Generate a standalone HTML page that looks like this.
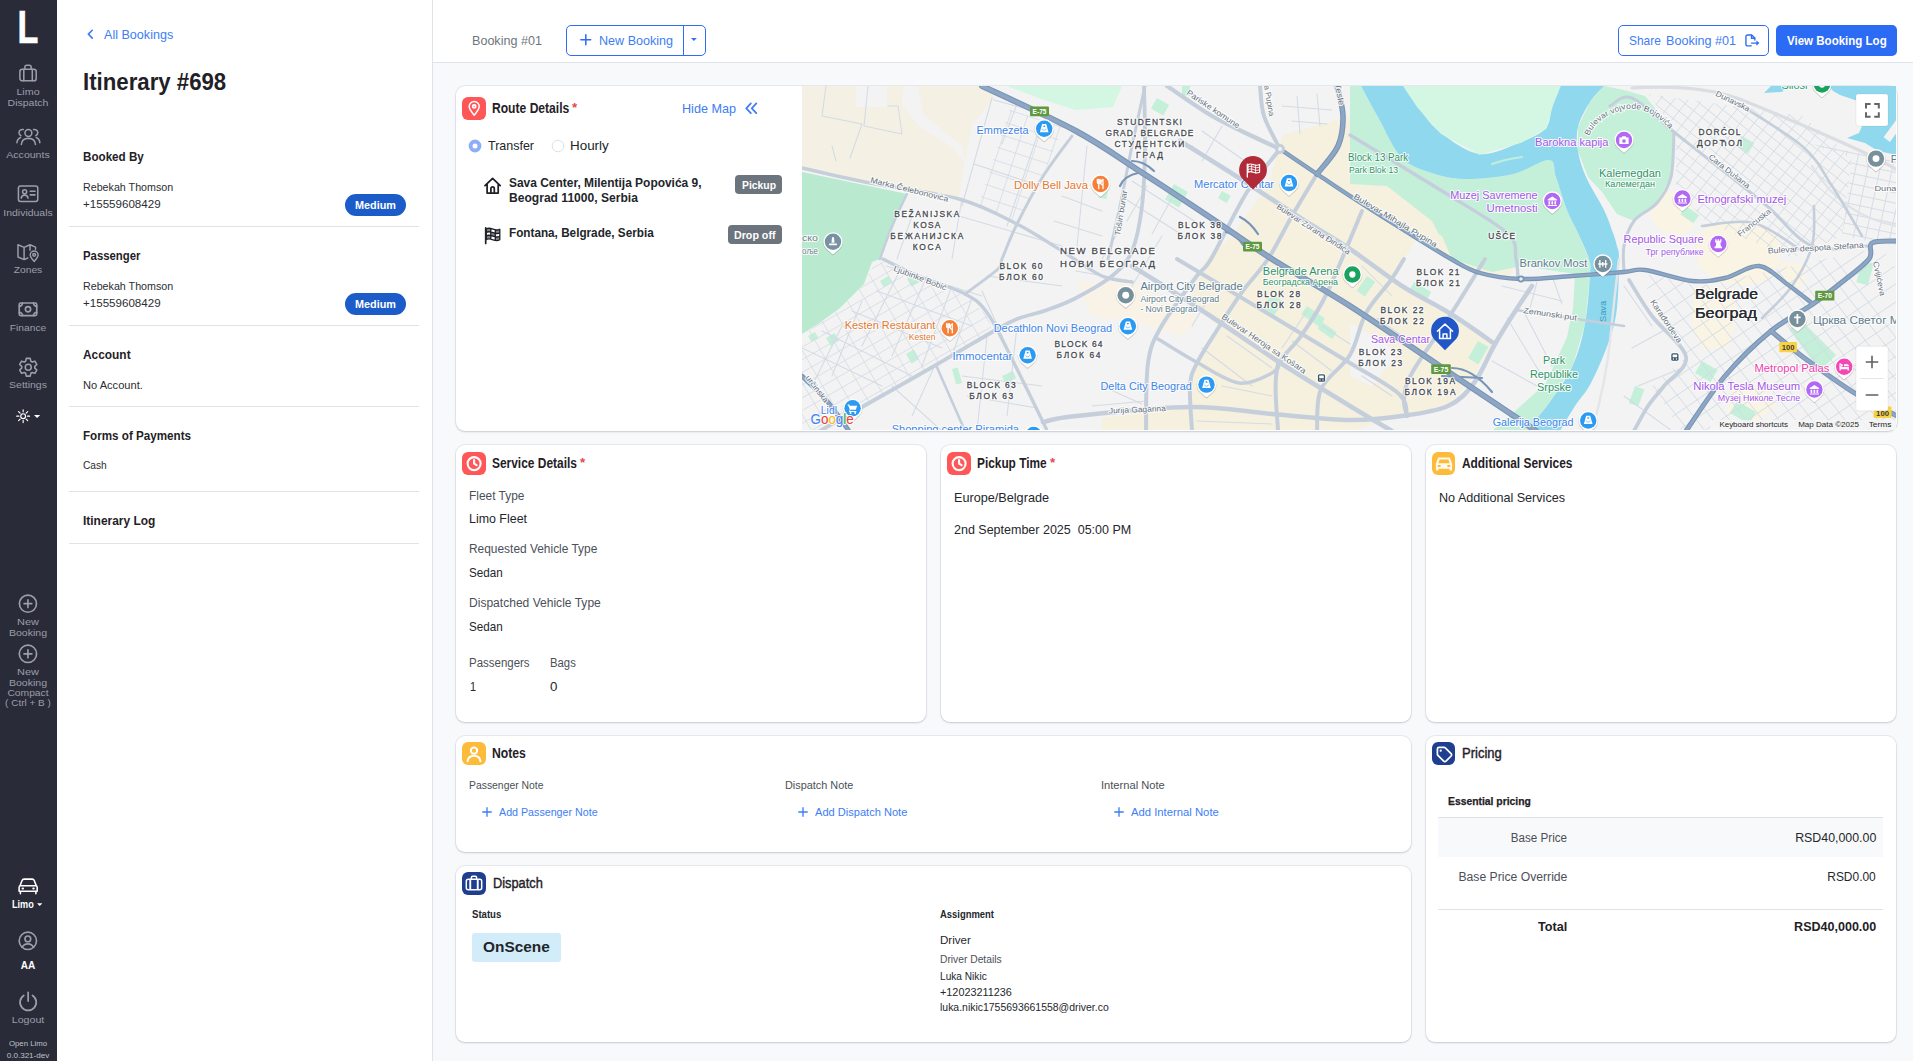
<!DOCTYPE html>
<html lang="en">
<head>
<meta charset="utf-8">
<title>Itinerary #698 - Open Limo</title>
<style>
*{box-sizing:border-box;margin:0;padding:0}
html,body{width:1913px;height:1061px;overflow:hidden}
body{position:relative;background:#f8f9fb;color:#212529;font-family:"Liberation Sans",sans-serif;font-size:14px;line-height:1}
div,span.t,svg.i,svg.map,hr,a,button,h1,h2,h3,p,label,section,nav,aside,header,main{position:absolute}
.g{position:static;display:contents}
span.t{white-space:pre;line-height:1;display:block}
svg.i{display:block;overflow:visible}
.nav{left:0;top:0;width:57px;height:1061px;background:#292b39}
.side{left:57px;top:0;width:376px;height:1061px;background:#fff;border-right:1px solid #dfe3ea}
.top{left:433px;top:0;width:1480px;height:63px;background:#fff;border-bottom:1px solid #dfe3ea}
.hr{height:1px;background:#dfe3ea;left:69px;width:350px}
.card{background:#fff;border-radius:9px;box-shadow:0 0 0 1px rgba(190,196,208,.28),0 1px 2px rgba(60,70,90,.22)}
.pill{background:#1b5cc8;border-radius:11px}
.badge{background:#6c757d;border-radius:4px}
.ib{border-radius:6px}
.btn{border:1px solid #2f6df4;border-radius:5px;background:#fff}
.btnp{border-radius:5px;background:#2c6bf4}
</style>
</head>
<body>
<nav class="nav">
<span class="t" id="t0" style="top:5.01px;font-size:45.8px;left:27.70px;font-weight:700;color:#fff;transform:translateX(-50%) scaleX(0.7433);transform-origin:50% 0;-webkit-text-stroke:.7px #fff;">L</span>
<svg class="i" style="left:17.9px;top:63.9px;width:20.1px;height:18.5px;color:#9c9ea8;" viewBox="0 0 20 20"><g fill="none" stroke="currentColor" stroke-linecap="round" stroke-linejoin="round" stroke-width="1.65"><rect x="1.2" y="5.6" width="17.6" height="12.6" rx="2.6"/><path d="M6.6 5.4V3.4a2 2 0 0 1 2-2h2.8a2 2 0 0 1 2 2v2M5.4 5.8v12.2M14.6 5.8v12.2"/></g></svg>
<span class="t" id="t1" style="top:87.01px;font-size:9.4px;left:28.10px;color:#9c9ea8;transform:translateX(-50%) scaleX(1.1413);transform-origin:50% 0;">Limo</span>
<span class="t" id="t2" style="top:98.01px;font-size:9.4px;left:28.00px;color:#9c9ea8;transform:translateX(-50%) scaleX(1.1210);transform-origin:50% 0;">Dispatch</span>
<svg class="i" style="left:15.6px;top:128px;width:24.8px;height:17.3px;color:#9c9ea8;" viewBox="0 0 26 18"><g fill="none" stroke="currentColor" stroke-linecap="round" stroke-linejoin="round" stroke-width="1.6"><circle cx="13" cy="5.2" r="3.6"/><path d="M5.6 17.2c.3-4.2 3.4-6.4 7.4-6.4s7.100 2.200 7.400 6.400M7.6 1.6c-2.4-.5-4.400 1.100-4.400 3.200 0 1.500.900 2.600 2 3.100M1 15.400c.200-2.900 1.600-4.700 3.800-5.500M18.400 1.600c2.400-.5 4.400 1.100 4.400 3.200 0 1.500-.9 2.600-2 3.100M25 15.400c-.2-2.900-1.600-4.700-3.800-5.500"/></g></svg>
<span class="t" id="t3" style="top:150.01px;font-size:9.4px;left:27.80px;color:#9c9ea8;transform:translateX(-50%) scaleX(1.1254);transform-origin:50% 0;">Accounts</span>
<svg class="i" style="left:16.9px;top:185.1px;width:22.2px;height:17.4px;color:#9c9ea8;" viewBox="0 0 22 18"><g fill="none" stroke="currentColor" stroke-linecap="round" stroke-linejoin="round" stroke-width="1.6"><rect x="1" y="1" width="20" height="16" rx="2.2"/><circle cx="7.4" cy="7" r="2.1"/><path d="M3.900 13.600c.300-2.100 1.700-3.100 3.500-3.100s3.200 1 3.500 3.100M13.200 6.400h5M13.200 10.200h5"/></g></svg>
<span class="t" id="t4" style="top:208.01px;font-size:9.4px;left:28.00px;color:#9c9ea8;transform:translateX(-50%) scaleX(1.1148);transform-origin:50% 0;">Individuals</span>
<svg class="i" style="left:17.4px;top:242.3px;width:22.7px;height:20.6px;color:#9c9ea8;" viewBox="0 0 23 20"><g fill="none" stroke="currentColor" stroke-linecap="round" stroke-linejoin="round" stroke-width="1.5"><path d="M11 15.800 7.200 17.400 1 14.800V2.400L7.200 5l6-2.600 5.600 2.300V7M7.200 5v12.400M13.200 2.400V8"/><path d="M17.400 19.200c2.300-2.600 4-4.400 4-6.500a4 4 0 0 0-8 0c0 2.100 1.700 3.900 4 6.500z"/><circle cx="17.400" cy="12.600" r="1.400"/></g></svg>
<span class="t" id="t5" style="top:265.01px;font-size:9.4px;left:27.90px;color:#9c9ea8;transform:translateX(-50%) scaleX(1.0935);transform-origin:50% 0;">Zones</span>
<svg class="i" style="left:18px;top:301.5px;width:20px;height:14.6px;color:#9c9ea8;" viewBox="0 0 20 15"><g fill="none" stroke="currentColor" stroke-linecap="round" stroke-linejoin="round" stroke-width="1.7"><rect x="1" y="1" width="18" height="13" rx="1.600"/><circle cx="10" cy="7.500" r="2.700"/><path d="M1 4.400a3.400 3.400 0 0 0 3.400-3.400M19 4.400a3.400 3.400 0 0 1-3.400-3.400M1 10.600a3.400 3.400 0 0 1 3.400 3.400M19 10.600a3.400 3.400 0 0 0-3.400 3.400"/></g></svg>
<span class="t" id="t6" style="top:323.01px;font-size:9.4px;left:27.80px;color:#9c9ea8;transform:translateX(-50%) scaleX(1.0911);transform-origin:50% 0;">Finance</span>
<svg class="i" style="left:17.8px;top:356.5px;width:20.5px;height:20.5px;color:#9c9ea8;" viewBox="0 0 24 24"><g fill="none" stroke="currentColor" stroke-linecap="round" stroke-linejoin="round" stroke-width="1.85"><circle cx="12" cy="12" r="3.500"/><path d="M8.99 4.91 L9.71 1.65 L14.29 1.65 L15.01 4.91 L16.63 5.85 L19.82 4.84 L22.11 8.81 L19.64 11.06 L19.64 12.94 L22.11 15.19 L19.82 19.16 L16.63 18.15 L15.01 19.09 L14.29 22.35 L9.71 22.35 L8.99 19.09 L7.37 18.15 L4.18 19.16 L1.89 15.19 L4.36 12.94 L4.36 11.06 L1.89 8.81 L4.18 4.84 L7.37 5.85Z"/></g></svg>
<span class="t" id="t7" style="top:380.01px;font-size:9.4px;left:27.70px;color:#9c9ea8;transform:translateX(-50%) scaleX(1.1188);transform-origin:50% 0;">Settings</span>
<svg class="i" style="left:16.2px;top:409px;width:14.3px;height:14.3px;color:#fff;" viewBox="0 0 16 16"><g fill="none" stroke="currentColor" stroke-width="1.3" stroke-linecap="round"><circle cx="8" cy="8" r="2.700"/><path d="M8 .8v2.400M8 12.800v2.400M.8 8h2.400M12.800 8h2.400M2.900 2.900l1.700 1.700M11.400 11.400l1.700 1.700M2.900 13.100l1.700-1.700M11.400 4.600l1.700-1.700"/></g></svg>
<svg class="i" style="left:34px;top:414.9px;width:6.2px;height:3.1px;color:#fff;" viewBox="0 0 8 4"><path fill="currentColor" d="M0 0h8L4 4z"/></svg>
<svg class="i" style="left:18.1px;top:594.1px;width:19.9px;height:19.4px;color:#9c9ea8;" viewBox="0 0 20 20"><g fill="none" stroke="currentColor" stroke-linecap="round" stroke-linejoin="round" stroke-width="1.7"><circle cx="10" cy="10" r="8.800"/><path d="M10 6v8M6 10h8"/></g></svg>
<span class="t" id="t8" style="top:617.01px;font-size:9.4px;left:28.10px;color:#9c9ea8;transform:translateX(-50%) scaleX(1.1670);transform-origin:50% 0;">New</span>
<span class="t" id="t9" style="top:628.01px;font-size:9.4px;left:28.10px;color:#9c9ea8;transform:translateX(-50%) scaleX(1.1272);transform-origin:50% 0;">Booking</span>
<svg class="i" style="left:18.1px;top:644.1px;width:19.9px;height:19.7px;color:#9c9ea8;" viewBox="0 0 20 20"><g fill="none" stroke="currentColor" stroke-linecap="round" stroke-linejoin="round" stroke-width="1.7"><circle cx="10" cy="10" r="8.800"/><path d="M10 6v8M6 10h8"/></g></svg>
<span class="t" id="t10" style="top:667.01px;font-size:9.4px;left:28.10px;color:#9c9ea8;transform:translateX(-50%) scaleX(1.1670);transform-origin:50% 0;">New</span>
<span class="t" id="t11" style="top:678.01px;font-size:9.4px;left:28.10px;color:#9c9ea8;transform:translateX(-50%) scaleX(1.1272);transform-origin:50% 0;">Booking</span>
<span class="t" id="t12" style="top:688.01px;font-size:9.4px;left:27.80px;color:#9c9ea8;transform:translateX(-50%) scaleX(1.0982);transform-origin:50% 0;">Compact</span>
<span class="t" id="t13" style="top:698.01px;font-size:9.4px;left:27.80px;color:#9c9ea8;transform:translateX(-50%) scaleX(1.0655);transform-origin:50% 0;">( Ctrl + B )</span>
<svg class="i" style="left:17.8px;top:877.5px;width:20.3px;height:16.9px;color:#fff;" viewBox="0 0 22 18"><g fill="none" stroke="currentColor" stroke-linecap="round" stroke-linejoin="round" stroke-width="1.700"><path d="M2.200 8.200 4.400 2.600A2.400 2.400 0 0 1 6.600 1.100h8.800a2.400 2.400 0 0 1 2.200 1.500l2.200 5.600M1.200 10a1.800 1.800 0 0 1 1.800-1.800h16a1.800 1.800 0 0 1 1.800 1.800v4.200H1.200zM2.600 14.400v2.400M19.400 14.400v2.400"/><path d="M4.900 11.300h.6M16.500 11.300h.6" stroke-width="2.100"/></g></svg>
<span class="t" id="t14" style="top:900.02px;font-size:10px;left:12.40px;font-weight:700;color:#fff;transform:scaleX(0.9125);transform-origin:0 0;">Limo</span>
<svg class="i" style="left:37.3px;top:903px;width:5.4px;height:3.2px;color:#fff;" viewBox="0 0 8 4"><path fill="currentColor" d="M0 0h8L4 4z"/></svg>
<svg class="i" style="left:18.1px;top:931.1px;width:19.7px;height:19.7px;color:#9c9ea8;" viewBox="0 0 20 20"><g fill="none" stroke="currentColor" stroke-linecap="round" stroke-linejoin="round" stroke-width="1.700"><circle cx="10" cy="10" r="8.800"/><circle cx="10" cy="8" r="2.900"/><path d="M4.400 16.400c1-2.300 3.100-3.400 5.600-3.400s4.600 1.100 5.600 3.400"/></g></svg>
<span class="t" id="t15" style="top:961.02px;font-size:10px;left:27.95px;font-weight:700;color:#fff;transform:translateX(-50%) scaleX(1.0032);transform-origin:50% 0;">AA</span>
<svg class="i" style="left:17.9px;top:991.1px;width:20.3px;height:20.6px;color:#9c9ea8;" viewBox="0 0 20 20"><g fill="none" stroke="currentColor" stroke-linecap="round" stroke-linejoin="round" stroke-width="1.700"><path d="M10 1.200v8.600M5.700 4.200a8 8 0 1 0 8.600 0"/></g></svg>
<span class="t" id="t16" style="top:1015.01px;font-size:9.4px;left:28.05px;color:#9c9ea8;transform:translateX(-50%) scaleX(1.1329);transform-origin:50% 0;">Logout</span>
<span class="t" id="t17" style="top:1040.01px;font-size:8px;left:27.85px;color:#bfc1c9;transform:translateX(-50%) scaleX(0.9734);transform-origin:50% 0;">Open Limo</span>
<span class="t" id="t18" style="top:1052.01px;font-size:8px;left:28.25px;color:#bfc1c9;transform:translateX(-50%) scaleX(1.0103);transform-origin:50% 0;">0.0.321-dev</span>
</nav>
<section class="g" aria-label="Itinerary summary">
<aside class="side"></aside>
<svg class="i" style="left:86.9px;top:28.7px;width:6.8px;height:10.4px;color:#3d7df5;" viewBox="0 0 8 12"><path fill="none" stroke="currentColor" stroke-linecap="round" stroke-linejoin="round" stroke-width="1.900" d="M6.200 1.400 1.600 6l4.600 4.600"/></svg>
<span class="t" id="t19" style="top:28.00px;font-size:13px;left:104.20px;color:#3d7df5;transform:scaleX(0.9672);transform-origin:0 0;">All Bookings</span>
<span class="t" id="t20" style="top:71.01px;font-size:23px;left:83.20px;font-weight:700;color:#1f2126;transform:scaleX(0.9654);transform-origin:0 0;">Itinerary #698</span>
<span class="t" id="t21" style="top:150.00px;font-size:13px;left:82.80px;font-weight:700;color:#1f2126;transform:scaleX(0.8954);transform-origin:0 0;">Booked By</span>
<span class="t" id="t22" style="top:182.00px;font-size:11px;left:82.80px;color:#2a2d33;transform:scaleX(0.9725);transform-origin:0 0;">Rebekah Thomson</span>
<span class="t" id="t23" style="top:199.00px;font-size:11px;left:82.60px;color:#2a2d33;transform:scaleX(1.0526);transform-origin:0 0;">+15559608429</span>
<div class="pill" style="left:344.9px;top:193.8px;width:61.1px;height:22.1px;"></div>
<span class="t" id="t24" style="top:200.00px;font-size:11px;left:355.20px;font-weight:700;color:#fff;transform:scaleX(0.9865);transform-origin:0 0;">Medium</span>
<div class="hr" style="left:69px;top:226px;width:350px;height:1px;"></div>
<span class="t" id="t25" style="top:249.00px;font-size:13px;left:82.80px;font-weight:700;color:#1f2126;transform:scaleX(0.8728);transform-origin:0 0;">Passenger</span>
<span class="t" id="t26" style="top:281.00px;font-size:11px;left:82.80px;color:#2a2d33;transform:scaleX(0.9725);transform-origin:0 0;">Rebekah Thomson</span>
<span class="t" id="t27" style="top:298.00px;font-size:11px;left:82.60px;color:#2a2d33;transform:scaleX(1.0526);transform-origin:0 0;">+15559608429</span>
<div class="pill" style="left:344.9px;top:292.5px;width:61.1px;height:22.1px;"></div>
<span class="t" id="t28" style="top:299.00px;font-size:11px;left:355.20px;font-weight:700;color:#fff;transform:scaleX(0.9865);transform-origin:0 0;">Medium</span>
<div class="hr" style="left:69px;top:324.7px;width:350px;height:1px;"></div>
<span class="t" id="t29" style="top:348.00px;font-size:13px;left:82.60px;font-weight:700;color:#1f2126;transform:scaleX(0.9154);transform-origin:0 0;">Account</span>
<span class="t" id="t30" style="top:380.00px;font-size:11px;left:82.80px;color:#2a2d33;transform:scaleX(1.0080);transform-origin:0 0;">No Account.</span>
<div class="hr" style="left:69px;top:406px;width:350px;height:1px;"></div>
<span class="t" id="t31" style="top:429.00px;font-size:13px;left:82.80px;font-weight:700;color:#1f2126;transform:scaleX(0.8951);transform-origin:0 0;">Forms of Payments</span>
<span class="t" id="t32" style="top:460.00px;font-size:11px;left:82.60px;color:#2a2d33;transform:scaleX(0.9265);transform-origin:0 0;">Cash</span>
<div class="hr" style="left:69px;top:491px;width:350px;height:1px;"></div>
<span class="t" id="t33" style="top:514.00px;font-size:13px;left:82.80px;font-weight:700;color:#1f2126;transform:scaleX(0.9194);transform-origin:0 0;">Itinerary Log</span>
<div class="hr" style="left:69px;top:543px;width:350px;height:1px;"></div>
</section>
<section class="g" aria-label="Booking toolbar">
<header class="top"></header>
<span class="t" id="t34" style="top:34.00px;font-size:13px;left:472.40px;color:#70757c;transform:scaleX(0.9671);transform-origin:0 0;">Booking #01</span>
<div class="btn" style="left:566.2px;top:25px;width:139.6px;height:30.6px;"></div>
<div class="" style="left:682.8px;top:25px;width:1.2px;height:30.6px;background:#2f6df4"></div>
<svg class="i" style="left:579.5px;top:34.2px;width:11.6px;height:11.6px;color:#2f6df4;" viewBox="0 0 12 12"><path fill="none" stroke="currentColor" stroke-width="1.600" stroke-linecap="round" d="M6 .9v10.200M.9 6h10.200"/></svg>
<span class="t" id="t35" style="top:34.00px;font-size:13px;left:599.30px;color:#3d7df5;transform:scaleX(0.9672);transform-origin:0 0;">New Booking</span>
<svg class="i" style="left:691px;top:38.4px;width:5.8px;height:2.9px;color:#2f6df4;" viewBox="0 0 8 4"><path fill="currentColor" d="M0 0h8L4 4z"/></svg>
<div class="btn" style="left:1618px;top:25px;width:151px;height:30.6px;"></div>
<span class="t" id="t36" style="top:34.00px;font-size:13px;left:1628.50px;color:#3d7df5;transform:scaleX(0.9163);transform-origin:0 0;">Share</span>
<span class="t" id="t37" style="top:34.00px;font-size:13px;left:1666.40px;color:#3d7df5;transform:scaleX(0.9684);transform-origin:0 0;">Booking #01</span>
<svg class="i" style="left:1745px;top:33.6px;width:14.8px;height:13px;color:#2f6df4;" viewBox="0 0 16 14"><g fill="none" stroke="currentColor" stroke-linecap="round" stroke-linejoin="round" stroke-width="1.500"><path d="M6.800 12.800H2.600A1.600 1.600 0 0 1 1 11.200V2.600A1.600 1.600 0 0 1 2.600 1h4.600l3.400 3.400v2"/><path d="M7 1.200v3.400h3.400M7 9.800h6.600" /></g><path fill="currentColor" d="M12.300 6.900 15.600 9.800l-3.300 2.900z"/></svg>
<div class="btnp" style="left:1776px;top:25px;width:121px;height:30.6px;"></div>
<span class="t" id="t38" style="top:34.00px;font-size:13px;left:1786.80px;font-weight:700;color:#fff;transform:scaleX(0.8867);transform-origin:0 0;">View Booking Log</span>
</section>
<section class="g" aria-label="Route Details">
<div class="card" style="left:455.5px;top:86px;width:1441px;height:345px;"></div>
<svg class="map" style="left:802px;top:86px;width:1094px;height:344px" viewBox="0 0 1094 344" font-family='"Liberation Sans","DejaVu Sans",sans-serif'><rect width="1095" height="345" fill="#f4f3f3"/><polygon points="0,0 180,0 193,12 170,38 163,74 157,112 68,97 0,83" fill="#f4f0e4"/><polygon points="54,0 85,0 85,21 54,21" fill="#f4f3f3"/><polygon points="101,0 116,0 121,28 160,60 163,76 148,60 117,40 100,20" fill="#f4f3f3"/><polygon points="481,49 548,30 620,95 700,150 714,173 700,215 690,258 672,290 646,320 600,330 548,345 300,345 300,332 388,322 388,300 396,277 417,241 388,215 404,173 430,150 447,125 466,100" fill="#f6f0df"/><polygon points="274,196 330,196 356,210 396,232 380,250 330,236 290,230" fill="#f8f3e6"/><polygon points="615,152 602,173 589,194 649,228 693,258 714,224 716,192 678,187 649,173" fill="#f4f3f3"/><polygon points="548,236 597,266 570,300 548,290" fill="#f4f3f3"/><polygon points="695,215 770,228 745,295 712,326 650,322 672,297 693,258" fill="#f4f3f3"/><polygon points="846,108 862,104 878,108 890,120 892,140 880,150 860,146 848,132" fill="#faf4e4"/><polygon points="893,150 910,138 936,136 960,138 976,150 978,178 962,196 940,200 915,196 896,180" fill="#faf4e4"/><polygon points="978,176 1000,178 1004,198 985,203" fill="#faf4e4"/><polygon points="893,200 930,202 936,232 926,262 900,264 890,240" fill="#faf4e4"/><polygon points="930,300 960,296 975,320 950,338 925,326" fill="#faf4e4"/><polygon points="0,86 105,108 78,173 70,176 62,198 38,222 16,238 0,248" fill="#b9e9cf"/><polygon points="205,0 320,0 311,21 274,24 245,15" fill="#d3f7e3"/><path d="M559 0 C562.0 5.5 570.2 21.0 577 33 C583.8 45.0 590.7 62.8 600 72 C609.3 81.2 622.2 84.5 633 88 C643.8 91.5 652.0 93.0 665 93 C678.0 93.0 697.3 91.2 711 88 C724.7 84.8 739.8 73.5 747 74 C754.2 74.5 751.0 82.7 754 91 C757.0 99.3 761.3 114.7 765 124 C768.7 133.3 772.3 138.8 776 147 C779.7 155.2 785.2 168.7 787 173 L760 173 L700 173 L640 150 L548 100 L548 0 Z" fill="#c4efd9"/><polygon points="548,98 585,100 630,135 649,173 548,111" fill="#f6f0df"/><polygon points="640,150 700,150 760,173 789,173 788,189 783,238 771,279 750,313 732,336 727,345 690,345 712,326 744,297 765,251 771,222 773,188 720,180 690,186 650,173" fill="#c4efd9"/><polygon points="802,0 822,4 843,10 872,46 869,91 855,117 832,135 815,128 800,106 786,91 776,65 776,41 788,16" fill="#c4efd9"/><polygon points="987,243 1001,236 1034,269 1018,285" fill="#c4efd9"/><rect x="355" y="12" width="14" height="12" fill="#c4efd9" transform="rotate(30 355 12)"/><rect x="380" y="0" width="8" height="10" fill="#c4efd9" transform="rotate(0 380 0)"/><rect x="372" y="98" width="16" height="18" fill="#c4efd9" transform="rotate(30 372 98)"/><rect x="420" y="105" width="10" height="8" fill="#c4efd9" transform="rotate(30 420 105)"/><rect x="940" y="50" width="14" height="12" fill="#c4efd9" transform="rotate(30 940 50)"/><rect x="884" y="120" width="16" height="10" fill="#c4efd9" transform="rotate(35 884 120)"/><rect x="1060" y="175" width="12" height="22" fill="#c4efd9" transform="rotate(15 1060 175)"/><rect x="900" y="275" width="18" height="14" fill="#c4efd9" transform="rotate(30 900 275)"/><rect x="935" y="315" width="22" height="14" fill="#c4efd9" transform="rotate(30 935 315)"/><rect x="833" y="300" width="10" height="18" fill="#c4efd9" transform="rotate(20 833 300)"/><rect x="78" y="195" width="10" height="7" fill="#c4efd9" transform="rotate(-30 78 195)"/><rect x="105" y="193" width="12" height="9" fill="#c4efd9" transform="rotate(-30 105 193)"/><rect x="6" y="250" width="8" height="7" fill="#c4efd9" transform="rotate(-30 6 250)"/><rect x="24" y="252" width="10" height="9" fill="#c4efd9" transform="rotate(-30 24 252)"/><rect x="104" y="268" width="9" height="11" fill="#c4efd9" transform="rotate(-30 104 268)"/><rect x="150" y="283" width="6" height="16" fill="#c4efd9" transform="rotate(-15 150 283)"/><rect x="200" y="290" width="12" height="8" fill="#c4efd9" transform="rotate(-25 200 290)"/><rect x="300" y="92" width="8" height="20" fill="#c4efd9" transform="rotate(10 300 92)"/><rect x="505" y="220" width="22" height="10" fill="#c4efd9" transform="rotate(35 505 220)"/><rect x="520" y="236" width="18" height="8" fill="#c4efd9" transform="rotate(35 520 236)"/><rect x="470" y="208" width="14" height="18" fill="#c4efd9" transform="rotate(35 470 208)"/><rect x="565" y="190" width="10" height="18" fill="#c4efd9" transform="rotate(35 565 190)"/><rect x="612" y="196" width="20" height="8" fill="#c4efd9" transform="rotate(30 612 196)"/><rect x="676" y="255" width="12" height="20" fill="#c4efd9" transform="rotate(30 676 255)"/><path d="M559 0 C562.0 5.5 570.2 21.0 577 33 C583.8 45.0 590.7 62.8 600 72 C609.3 81.2 622.2 84.5 633 88 C643.8 91.5 652.0 93.0 665 93 C678.0 93.0 697.3 91.2 711 88 C724.7 84.8 739.8 73.5 747 74 C754.2 74.5 751.0 82.7 754 91 C757.0 99.3 761.3 114.7 765 124 C768.7 133.3 772.3 138.8 776 147 C779.7 155.2 785.0 166.0 787 173 C789.0 180.0 788.7 178.2 788 189 C787.3 199.8 785.8 223.0 783 238 C780.2 253.0 776.5 266.5 771 279 C765.5 291.5 756.5 303.5 750 313 C743.5 322.5 736.0 330.7 732 336 C728.0 341.3 727.0 343.5 726 345 L758 345 C760.5 340.8 767.8 328.0 773 320 C778.2 312.0 783.3 307.8 789 297 C794.7 286.2 802.7 267.5 807 255 C811.3 242.5 813.3 235.7 815 222 C816.7 208.3 817.0 183.3 817 173 C817.0 162.7 816.0 164.3 815 160 C814.0 155.7 813.2 153.0 811 147 C808.8 141.0 806.5 133.3 802 124 C797.5 114.7 788.3 100.8 784 91 C779.7 81.2 777.3 73.3 776 65 C774.7 56.7 774.0 49.2 776 41 C778.0 32.8 783.7 22.8 788 16 C792.3 9.2 799.7 2.7 802 0 L758 0 C756.7 3.3 752.3 13.0 750 20 C747.7 27.0 749.2 36.0 744 42 C738.8 48.0 730.0 51.7 719 56 C708.0 60.3 691.3 69.5 678 68 C664.7 66.5 649.3 54.8 639 47 C628.7 39.2 622.2 28.8 616 21 C609.8 13.2 604.3 3.5 602 0 Z" fill="#90d8ee"/><polygon points="602,0 758,0 750,20 744,42 719,56 678,68 639,47 616,21" fill="#d3f7e3" stroke="#d3f7e3" stroke-width="1.5" stroke-linejoin="round"/><path d="M690 78 q14 -5 30 -7" fill="none" stroke="#bfeedd" stroke-width="2" stroke-linejoin="round" stroke-linecap="round"/><polygon points="962,7 969,0 985,0 980,6" fill="#90d8ee"/><polygon points="1027,0 1095,0 1095,69 1076,65 1063,57 1045,52 1057,47 1060,40 1056,15 1038,9 1031,5" fill="#90d8ee"/><polygon points="1081.6,51.3 1094,34.2 1095,34 1095,46 1088,56" fill="#f4f3f3"/><g><polyline points="24,0 20,30 60,38 48,72" fill="none" stroke="#d3dbe5" stroke-width="1.05" stroke-linejoin="round" stroke-linecap="round"/><polyline points="66,0 62,40 100,48 96,20 86,20" fill="none" stroke="#d3dbe5" stroke-width="1.05" stroke-linejoin="round" stroke-linecap="round"/><polyline points="30,60 34,75" fill="none" stroke="#d3dbe5" stroke-width="1.05" stroke-linejoin="round" stroke-linecap="round"/><polyline points="190,12 160,120" fill="none" stroke="#d3dbe5" stroke-width="1.05" stroke-linejoin="round" stroke-linecap="round"/><polyline points="215,18 200,58" fill="none" stroke="#d3dbe5" stroke-width="1.05" stroke-linejoin="round" stroke-linecap="round"/><polyline points="235,50 205,140" fill="none" stroke="#d3dbe5" stroke-width="1.05" stroke-linejoin="round" stroke-linecap="round"/><polyline points="192,14 250,30" fill="none" stroke="#d3dbe5" stroke-width="1.05" stroke-linejoin="round" stroke-linecap="round"/><polyline points="172,78 238,100" fill="none" stroke="#d3dbe5" stroke-width="1.05" stroke-linejoin="round" stroke-linecap="round"/><polyline points="160,112 150,173" fill="none" stroke="#d3dbe5" stroke-width="1.05" stroke-linejoin="round" stroke-linecap="round"/><polyline points="150,128 260,160" fill="none" stroke="#d3dbe5" stroke-width="1.05" stroke-linejoin="round" stroke-linecap="round"/><polyline points="110,130 95,173" fill="none" stroke="#d3dbe5" stroke-width="1.05" stroke-linejoin="round" stroke-linecap="round"/><polyline points="84,180 180,210" fill="none" stroke="#d3dbe5" stroke-width="1.05" stroke-linejoin="round" stroke-linecap="round"/><polyline points="75,205 170,240" fill="none" stroke="#d3dbe5" stroke-width="1.05" stroke-linejoin="round" stroke-linecap="round"/><polyline points="50,225 140,262" fill="none" stroke="#d3dbe5" stroke-width="1.05" stroke-linejoin="round" stroke-linecap="round"/><polyline points="20,245 110,290" fill="none" stroke="#d3dbe5" stroke-width="1.05" stroke-linejoin="round" stroke-linecap="round"/><polyline points="0,262 80,300" fill="none" stroke="#d3dbe5" stroke-width="1.05" stroke-linejoin="round" stroke-linecap="round"/><polyline points="100,180 60,260" fill="none" stroke="#d3dbe5" stroke-width="1.05" stroke-linejoin="round" stroke-linecap="round"/><polyline points="125,190 90,270" fill="none" stroke="#d3dbe5" stroke-width="1.05" stroke-linejoin="round" stroke-linecap="round"/><polyline points="150,200 120,280" fill="none" stroke="#d3dbe5" stroke-width="1.05" stroke-linejoin="round" stroke-linecap="round"/><polyline points="170,212 150,270" fill="none" stroke="#d3dbe5" stroke-width="1.05" stroke-linejoin="round" stroke-linecap="round"/><polyline points="60,215 30,290" fill="none" stroke="#d3dbe5" stroke-width="1.05" stroke-linejoin="round" stroke-linecap="round"/><polyline points="40,240 10,300" fill="none" stroke="#d3dbe5" stroke-width="1.05" stroke-linejoin="round" stroke-linecap="round"/><polyline points="185,190 260,200" fill="none" stroke="#d3dbe5" stroke-width="1.05" stroke-linejoin="round" stroke-linecap="round"/><polyline points="180,205 200,250" fill="none" stroke="#d3dbe5" stroke-width="1.05" stroke-linejoin="round" stroke-linecap="round"/><polyline points="133,279 110,330" fill="none" stroke="#d3dbe5" stroke-width="1.05" stroke-linejoin="round" stroke-linecap="round"/><polyline points="90,300 140,345" fill="none" stroke="#d3dbe5" stroke-width="1.05" stroke-linejoin="round" stroke-linecap="round"/><polyline points="160,290 240,300" fill="none" stroke="#d3dbe5" stroke-width="1.05" stroke-linejoin="round" stroke-linecap="round"/><polyline points="165,310 235,322" fill="none" stroke="#d3dbe5" stroke-width="1.05" stroke-linejoin="round" stroke-linecap="round"/><polyline points="185,250 175,345" fill="none" stroke="#d3dbe5" stroke-width="1.05" stroke-linejoin="round" stroke-linecap="round"/><polyline points="215,240 205,330" fill="none" stroke="#d3dbe5" stroke-width="1.05" stroke-linejoin="round" stroke-linecap="round"/><polyline points="260,110 300,125" fill="none" stroke="#d3dbe5" stroke-width="1.05" stroke-linejoin="round" stroke-linecap="round"/><polyline points="252,135 300,150" fill="none" stroke="#d3dbe5" stroke-width="1.05" stroke-linejoin="round" stroke-linecap="round"/><polyline points="285,60 275,160" fill="none" stroke="#d3dbe5" stroke-width="1.05" stroke-linejoin="round" stroke-linecap="round"/><polyline points="330,95 400,140" fill="none" stroke="#d3dbe5" stroke-width="1.05" stroke-linejoin="round" stroke-linecap="round"/><polyline points="322,112 385,152" fill="none" stroke="#d3dbe5" stroke-width="1.05" stroke-linejoin="round" stroke-linecap="round"/><polyline points="345,100 325,135" fill="none" stroke="#d3dbe5" stroke-width="1.05" stroke-linejoin="round" stroke-linecap="round"/><polyline points="370,112 350,148" fill="none" stroke="#d3dbe5" stroke-width="1.05" stroke-linejoin="round" stroke-linecap="round"/><polyline points="320,140 300,173" fill="none" stroke="#d3dbe5" stroke-width="1.05" stroke-linejoin="round" stroke-linecap="round"/><polyline points="360,150 330,200" fill="none" stroke="#d3dbe5" stroke-width="1.05" stroke-linejoin="round" stroke-linecap="round"/><polyline points="390,60 440,95" fill="none" stroke="#d3dbe5" stroke-width="1.05" stroke-linejoin="round" stroke-linecap="round"/><polyline points="400,45 450,80" fill="none" stroke="#d3dbe5" stroke-width="1.05" stroke-linejoin="round" stroke-linecap="round"/><polyline points="420,40 400,75" fill="none" stroke="#d3dbe5" stroke-width="1.05" stroke-linejoin="round" stroke-linecap="round"/><polyline points="480,20 530,24" fill="none" stroke="#d3dbe5" stroke-width="1.05" stroke-linejoin="round" stroke-linecap="round"/><polyline points="490,35 525,38" fill="none" stroke="#d3dbe5" stroke-width="1.05" stroke-linejoin="round" stroke-linecap="round"/><polyline points="495,10 498,48" fill="none" stroke="#d3dbe5" stroke-width="1.05" stroke-linejoin="round" stroke-linecap="round"/><polyline points="515,8 518,40" fill="none" stroke="#d3dbe5" stroke-width="1.05" stroke-linejoin="round" stroke-linecap="round"/><polyline points="274,185 330,195" fill="none" stroke="#d3dbe5" stroke-width="1.05" stroke-linejoin="round" stroke-linecap="round"/><polyline points="360,200 420,238" fill="none" stroke="#d3dbe5" stroke-width="1.05" stroke-linejoin="round" stroke-linecap="round"/><polyline points="405,215 390,240" fill="none" stroke="#d3dbe5" stroke-width="1.05" stroke-linejoin="round" stroke-linecap="round"/><polyline points="425,250 470,282" fill="none" stroke="#d3dbe5" stroke-width="1.05" stroke-linejoin="round" stroke-linecap="round"/><polyline points="400,262 450,300" fill="none" stroke="#d3dbe5" stroke-width="1.05" stroke-linejoin="round" stroke-linecap="round"/><polyline points="420,300 470,310" fill="none" stroke="#d3dbe5" stroke-width="1.05" stroke-linejoin="round" stroke-linecap="round"/><polyline points="300,300 340,318" fill="none" stroke="#d3dbe5" stroke-width="1.05" stroke-linejoin="round" stroke-linecap="round"/><polyline points="290,320 345,315" fill="none" stroke="#d3dbe5" stroke-width="1.05" stroke-linejoin="round" stroke-linecap="round"/><polyline points="395,335 470,338" fill="none" stroke="#d3dbe5" stroke-width="1.05" stroke-linejoin="round" stroke-linecap="round"/><polyline points="520,240 548,258" fill="none" stroke="#d3dbe5" stroke-width="1.05" stroke-linejoin="round" stroke-linecap="round"/><polyline points="490,255 530,285" fill="none" stroke="#d3dbe5" stroke-width="1.05" stroke-linejoin="round" stroke-linecap="round"/><polyline points="505,225 480,262" fill="none" stroke="#d3dbe5" stroke-width="1.05" stroke-linejoin="round" stroke-linecap="round"/><polyline points="560,180 590,210" fill="none" stroke="#d3dbe5" stroke-width="1.05" stroke-linejoin="round" stroke-linecap="round"/><polyline points="575,232 600,250" fill="none" stroke="#d3dbe5" stroke-width="1.05" stroke-linejoin="round" stroke-linecap="round"/><polyline points="560,290 590,310" fill="none" stroke="#d3dbe5" stroke-width="1.05" stroke-linejoin="round" stroke-linecap="round"/><polyline points="700,200 760,215" fill="none" stroke="#d3dbe5" stroke-width="1.05" stroke-linejoin="round" stroke-linecap="round"/><polyline points="705,232 740,290" fill="none" stroke="#d3dbe5" stroke-width="1.05" stroke-linejoin="round" stroke-linecap="round"/><polyline points="722,226 750,280" fill="none" stroke="#d3dbe5" stroke-width="1.05" stroke-linejoin="round" stroke-linecap="round"/><polyline points="690,275 735,300" fill="none" stroke="#d3dbe5" stroke-width="1.05" stroke-linejoin="round" stroke-linecap="round"/><polyline points="735,196 728,222" fill="none" stroke="#d3dbe5" stroke-width="1.05" stroke-linejoin="round" stroke-linecap="round"/><polyline points="750,190 760,218" fill="none" stroke="#d3dbe5" stroke-width="1.05" stroke-linejoin="round" stroke-linecap="round"/><g clip-path="url(#cd)"><polyline points="922.9,-96.7 1140.5,79.5" fill="none" stroke="#d3dbe5" stroke-width="0.95" stroke-linejoin="round" stroke-linecap="round"/><polyline points="917,-89.3 1134.6,86.9" fill="none" stroke="#d3dbe5" stroke-width="0.95" stroke-linejoin="round" stroke-linecap="round"/><polyline points="911,-81.9 1128.6,94.3" fill="none" stroke="#d3dbe5" stroke-width="0.95" stroke-linejoin="round" stroke-linecap="round"/><polyline points="905,-74.6 1122.6,101.7" fill="none" stroke="#d3dbe5" stroke-width="0.95" stroke-linejoin="round" stroke-linecap="round"/><polyline points="899,-67.2 1116.6,109" fill="none" stroke="#d3dbe5" stroke-width="0.95" stroke-linejoin="round" stroke-linecap="round"/><polyline points="893,-59.8 1110.7,116.4" fill="none" stroke="#d3dbe5" stroke-width="0.95" stroke-linejoin="round" stroke-linecap="round"/><polyline points="887.1,-52.4 1104.7,123.8" fill="none" stroke="#d3dbe5" stroke-width="0.95" stroke-linejoin="round" stroke-linecap="round"/><polyline points="881.1,-45 1098.7,131.2" fill="none" stroke="#d3dbe5" stroke-width="0.95" stroke-linejoin="round" stroke-linecap="round"/><polyline points="875.1,-37.6 1092.7,138.6" fill="none" stroke="#d3dbe5" stroke-width="0.95" stroke-linejoin="round" stroke-linecap="round"/><polyline points="869.1,-30.3 1086.7,146" fill="none" stroke="#d3dbe5" stroke-width="0.95" stroke-linejoin="round" stroke-linecap="round"/><polyline points="863.2,-22.9 1080.8,153.3" fill="none" stroke="#d3dbe5" stroke-width="0.95" stroke-linejoin="round" stroke-linecap="round"/><polyline points="857.2,-15.5 1074.8,160.7" fill="none" stroke="#d3dbe5" stroke-width="0.95" stroke-linejoin="round" stroke-linecap="round"/><polyline points="851.2,-8.1 1068.8,168.1" fill="none" stroke="#d3dbe5" stroke-width="0.95" stroke-linejoin="round" stroke-linecap="round"/><polyline points="845.2,-0.7 1062.8,175.5" fill="none" stroke="#d3dbe5" stroke-width="0.95" stroke-linejoin="round" stroke-linecap="round"/><polyline points="839.2,6.7 1056.8,182.9" fill="none" stroke="#d3dbe5" stroke-width="0.95" stroke-linejoin="round" stroke-linecap="round"/><polyline points="833.3,14 1050.9,190.3" fill="none" stroke="#d3dbe5" stroke-width="0.95" stroke-linejoin="round" stroke-linecap="round"/><polyline points="827.3,21.4 1044.9,197.6" fill="none" stroke="#d3dbe5" stroke-width="0.95" stroke-linejoin="round" stroke-linecap="round"/><polyline points="821.3,28.8 1038.9,205" fill="none" stroke="#d3dbe5" stroke-width="0.95" stroke-linejoin="round" stroke-linecap="round"/><polyline points="815.3,36.2 1032.9,212.4" fill="none" stroke="#d3dbe5" stroke-width="0.95" stroke-linejoin="round" stroke-linecap="round"/><polyline points="809.3,43.6 1027,219.8" fill="none" stroke="#d3dbe5" stroke-width="0.95" stroke-linejoin="round" stroke-linecap="round"/><polyline points="803.4,51 1021,227.2" fill="none" stroke="#d3dbe5" stroke-width="0.95" stroke-linejoin="round" stroke-linecap="round"/><polyline points="797.4,58.3 1015,234.6" fill="none" stroke="#d3dbe5" stroke-width="0.95" stroke-linejoin="round" stroke-linecap="round"/><polyline points="791.4,65.7 1009,241.9" fill="none" stroke="#d3dbe5" stroke-width="0.95" stroke-linejoin="round" stroke-linecap="round"/><polyline points="785.4,73.1 1003,249.3" fill="none" stroke="#d3dbe5" stroke-width="0.95" stroke-linejoin="round" stroke-linecap="round"/><polyline points="779.5,80.5 997.1,256.7" fill="none" stroke="#d3dbe5" stroke-width="0.95" stroke-linejoin="round" stroke-linecap="round"/><polyline points="781.9,90.2 932.9,-96.3" fill="none" stroke="#d3dbe5" stroke-width="0.95" stroke-linejoin="round" stroke-linecap="round"/><polyline points="790.4,97.1 941.5,-89.4" fill="none" stroke="#d3dbe5" stroke-width="0.95" stroke-linejoin="round" stroke-linecap="round"/><polyline points="799,104 950,-82.5" fill="none" stroke="#d3dbe5" stroke-width="0.95" stroke-linejoin="round" stroke-linecap="round"/><polyline points="807.5,111 958.6,-75.6" fill="none" stroke="#d3dbe5" stroke-width="0.95" stroke-linejoin="round" stroke-linecap="round"/><polyline points="816.1,117.9 967.1,-68.6" fill="none" stroke="#d3dbe5" stroke-width="0.95" stroke-linejoin="round" stroke-linecap="round"/><polyline points="824.6,124.8 975.7,-61.7" fill="none" stroke="#d3dbe5" stroke-width="0.95" stroke-linejoin="round" stroke-linecap="round"/><polyline points="833.2,131.7 984.2,-54.8" fill="none" stroke="#d3dbe5" stroke-width="0.95" stroke-linejoin="round" stroke-linecap="round"/><polyline points="841.7,138.6 992.8,-47.9" fill="none" stroke="#d3dbe5" stroke-width="0.95" stroke-linejoin="round" stroke-linecap="round"/><polyline points="850.3,145.6 1001.3,-40.9" fill="none" stroke="#d3dbe5" stroke-width="0.95" stroke-linejoin="round" stroke-linecap="round"/><polyline points="858.8,152.5 1009.9,-34" fill="none" stroke="#d3dbe5" stroke-width="0.95" stroke-linejoin="round" stroke-linecap="round"/><polyline points="867.4,159.4 1018.4,-27.1" fill="none" stroke="#d3dbe5" stroke-width="0.95" stroke-linejoin="round" stroke-linecap="round"/><polyline points="875.9,166.3 1027,-20.2" fill="none" stroke="#d3dbe5" stroke-width="0.95" stroke-linejoin="round" stroke-linecap="round"/><polyline points="884.5,173.3 1035.5,-13.3" fill="none" stroke="#d3dbe5" stroke-width="0.95" stroke-linejoin="round" stroke-linecap="round"/><polyline points="893,180.2 1044.1,-6.3" fill="none" stroke="#d3dbe5" stroke-width="0.95" stroke-linejoin="round" stroke-linecap="round"/><polyline points="901.6,187.1 1052.6,0.6" fill="none" stroke="#d3dbe5" stroke-width="0.95" stroke-linejoin="round" stroke-linecap="round"/><polyline points="910.1,194 1061.2,7.5" fill="none" stroke="#d3dbe5" stroke-width="0.95" stroke-linejoin="round" stroke-linecap="round"/><polyline points="918.7,200.9 1069.7,14.4" fill="none" stroke="#d3dbe5" stroke-width="0.95" stroke-linejoin="round" stroke-linecap="round"/><polyline points="927.2,207.9 1078.3,21.4" fill="none" stroke="#d3dbe5" stroke-width="0.95" stroke-linejoin="round" stroke-linecap="round"/><polyline points="935.8,214.8 1086.8,28.3" fill="none" stroke="#d3dbe5" stroke-width="0.95" stroke-linejoin="round" stroke-linecap="round"/><polyline points="944.3,221.7 1095.4,35.2" fill="none" stroke="#d3dbe5" stroke-width="0.95" stroke-linejoin="round" stroke-linecap="round"/><polyline points="952.9,228.6 1103.9,42.1" fill="none" stroke="#d3dbe5" stroke-width="0.95" stroke-linejoin="round" stroke-linecap="round"/><polyline points="961.4,235.6 1112.5,49" fill="none" stroke="#d3dbe5" stroke-width="0.95" stroke-linejoin="round" stroke-linecap="round"/><polyline points="970,242.5 1121,56" fill="none" stroke="#d3dbe5" stroke-width="0.95" stroke-linejoin="round" stroke-linecap="round"/><polyline points="978.5,249.4 1129.6,62.9" fill="none" stroke="#d3dbe5" stroke-width="0.95" stroke-linejoin="round" stroke-linecap="round"/><polyline points="987.1,256.3 1138.1,69.8" fill="none" stroke="#d3dbe5" stroke-width="0.95" stroke-linejoin="round" stroke-linecap="round"/></g><g clip-path="url(#ce)"><polyline points="953.7,71.9 1150.7,324" fill="none" stroke="#d3dbe5" stroke-width="0.95" stroke-linejoin="round" stroke-linecap="round"/><polyline points="943.4,79.9 1140.5,332.1" fill="none" stroke="#d3dbe5" stroke-width="0.95" stroke-linejoin="round" stroke-linecap="round"/><polyline points="933.2,87.9 1130.2,340.1" fill="none" stroke="#d3dbe5" stroke-width="0.95" stroke-linejoin="round" stroke-linecap="round"/><polyline points="923,95.9 1120,348.1" fill="none" stroke="#d3dbe5" stroke-width="0.95" stroke-linejoin="round" stroke-linecap="round"/><polyline points="912.7,103.9 1109.7,356.1" fill="none" stroke="#d3dbe5" stroke-width="0.95" stroke-linejoin="round" stroke-linecap="round"/><polyline points="902.5,111.9 1099.5,364.1" fill="none" stroke="#d3dbe5" stroke-width="0.95" stroke-linejoin="round" stroke-linecap="round"/><polyline points="892.2,119.9 1089.2,372.1" fill="none" stroke="#d3dbe5" stroke-width="0.95" stroke-linejoin="round" stroke-linecap="round"/><polyline points="882,127.9 1079,380.1" fill="none" stroke="#d3dbe5" stroke-width="0.95" stroke-linejoin="round" stroke-linecap="round"/><polyline points="871.7,135.9 1068.7,388.1" fill="none" stroke="#d3dbe5" stroke-width="0.95" stroke-linejoin="round" stroke-linecap="round"/><polyline points="861.5,143.9 1058.5,396.1" fill="none" stroke="#d3dbe5" stroke-width="0.95" stroke-linejoin="round" stroke-linecap="round"/><polyline points="851.3,151.9 1048.3,404.1" fill="none" stroke="#d3dbe5" stroke-width="0.95" stroke-linejoin="round" stroke-linecap="round"/><polyline points="841,159.9 1038,412.1" fill="none" stroke="#d3dbe5" stroke-width="0.95" stroke-linejoin="round" stroke-linecap="round"/><polyline points="830.8,167.9 1027.8,420.1" fill="none" stroke="#d3dbe5" stroke-width="0.95" stroke-linejoin="round" stroke-linecap="round"/><polyline points="820.5,175.9 1017.5,428.1" fill="none" stroke="#d3dbe5" stroke-width="0.95" stroke-linejoin="round" stroke-linecap="round"/><polyline points="810.3,183.9 1007.3,436.1" fill="none" stroke="#d3dbe5" stroke-width="0.95" stroke-linejoin="round" stroke-linecap="round"/><polyline points="800,191.9 997,444.1" fill="none" stroke="#d3dbe5" stroke-width="0.95" stroke-linejoin="round" stroke-linecap="round"/><polyline points="789.8,199.9 986.8,452.1" fill="none" stroke="#d3dbe5" stroke-width="0.95" stroke-linejoin="round" stroke-linecap="round"/><polyline points="779.5,207.9 976.6,460.1" fill="none" stroke="#d3dbe5" stroke-width="0.95" stroke-linejoin="round" stroke-linecap="round"/><polyline points="769.3,216 966.3,468.1" fill="none" stroke="#d3dbe5" stroke-width="0.95" stroke-linejoin="round" stroke-linecap="round"/><polyline points="760.3,260 1025.5,81" fill="none" stroke="#d3dbe5" stroke-width="0.95" stroke-linejoin="round" stroke-linecap="round"/><polyline points="768.6,272.4 1033.9,93.5" fill="none" stroke="#d3dbe5" stroke-width="0.95" stroke-linejoin="round" stroke-linecap="round"/><polyline points="777,284.9 1042.3,105.9" fill="none" stroke="#d3dbe5" stroke-width="0.95" stroke-linejoin="round" stroke-linecap="round"/><polyline points="785.4,297.3 1050.7,118.4" fill="none" stroke="#d3dbe5" stroke-width="0.95" stroke-linejoin="round" stroke-linecap="round"/><polyline points="793.8,309.7 1059.1,130.8" fill="none" stroke="#d3dbe5" stroke-width="0.95" stroke-linejoin="round" stroke-linecap="round"/><polyline points="802.2,322.2 1067.5,143.2" fill="none" stroke="#d3dbe5" stroke-width="0.95" stroke-linejoin="round" stroke-linecap="round"/><polyline points="810.6,334.6 1075.9,155.7" fill="none" stroke="#d3dbe5" stroke-width="0.95" stroke-linejoin="round" stroke-linecap="round"/><polyline points="819,347 1084.3,168.1" fill="none" stroke="#d3dbe5" stroke-width="0.95" stroke-linejoin="round" stroke-linecap="round"/><polyline points="827.4,359.5 1092.6,180.5" fill="none" stroke="#d3dbe5" stroke-width="0.95" stroke-linejoin="round" stroke-linecap="round"/><polyline points="835.7,371.9 1101,193" fill="none" stroke="#d3dbe5" stroke-width="0.95" stroke-linejoin="round" stroke-linecap="round"/><polyline points="844.1,384.3 1109.4,205.4" fill="none" stroke="#d3dbe5" stroke-width="0.95" stroke-linejoin="round" stroke-linecap="round"/><polyline points="852.5,396.8 1117.8,217.8" fill="none" stroke="#d3dbe5" stroke-width="0.95" stroke-linejoin="round" stroke-linecap="round"/><polyline points="860.9,409.2 1126.2,230.3" fill="none" stroke="#d3dbe5" stroke-width="0.95" stroke-linejoin="round" stroke-linecap="round"/><polyline points="869.3,421.6 1134.6,242.7" fill="none" stroke="#d3dbe5" stroke-width="0.95" stroke-linejoin="round" stroke-linecap="round"/><polyline points="877.7,434.1 1143,255.1" fill="none" stroke="#d3dbe5" stroke-width="0.95" stroke-linejoin="round" stroke-linecap="round"/><polyline points="886.1,446.5 1151.4,267.6" fill="none" stroke="#d3dbe5" stroke-width="0.95" stroke-linejoin="round" stroke-linecap="round"/><polyline points="894.5,459 1159.7,280" fill="none" stroke="#d3dbe5" stroke-width="0.95" stroke-linejoin="round" stroke-linecap="round"/></g><g clip-path="url(#cf)"><polyline points="1008.2,17.2 1145.1,46.3" fill="none" stroke="#d3dbe5" stroke-width="0.95" stroke-linejoin="round" stroke-linecap="round"/><polyline points="1006.1,27 1143,56.1" fill="none" stroke="#d3dbe5" stroke-width="0.95" stroke-linejoin="round" stroke-linecap="round"/><polyline points="1004,36.8 1140.9,65.9" fill="none" stroke="#d3dbe5" stroke-width="0.95" stroke-linejoin="round" stroke-linecap="round"/><polyline points="1001.9,46.5 1138.9,75.6" fill="none" stroke="#d3dbe5" stroke-width="0.95" stroke-linejoin="round" stroke-linecap="round"/><polyline points="999.8,56.3 1136.8,85.4" fill="none" stroke="#d3dbe5" stroke-width="0.95" stroke-linejoin="round" stroke-linecap="round"/><polyline points="997.8,66.1 1134.7,95.2" fill="none" stroke="#d3dbe5" stroke-width="0.95" stroke-linejoin="round" stroke-linecap="round"/><polyline points="995.7,75.9 1132.6,105" fill="none" stroke="#d3dbe5" stroke-width="0.95" stroke-linejoin="round" stroke-linecap="round"/><polyline points="993.6,85.7 1130.5,114.8" fill="none" stroke="#d3dbe5" stroke-width="0.95" stroke-linejoin="round" stroke-linecap="round"/><polyline points="991.5,95.4 1128.5,124.6" fill="none" stroke="#d3dbe5" stroke-width="0.95" stroke-linejoin="round" stroke-linecap="round"/><polyline points="989.5,105.2 1126.4,134.3" fill="none" stroke="#d3dbe5" stroke-width="0.95" stroke-linejoin="round" stroke-linecap="round"/><polyline points="987.4,115 1124.3,144.1" fill="none" stroke="#d3dbe5" stroke-width="0.95" stroke-linejoin="round" stroke-linecap="round"/><polyline points="985.3,124.8 1122.2,153.9" fill="none" stroke="#d3dbe5" stroke-width="0.95" stroke-linejoin="round" stroke-linecap="round"/><polyline points="983.2,134.6 1120.2,163.7" fill="none" stroke="#d3dbe5" stroke-width="0.95" stroke-linejoin="round" stroke-linecap="round"/><polyline points="981.1,144.4 1118.1,173.5" fill="none" stroke="#d3dbe5" stroke-width="0.95" stroke-linejoin="round" stroke-linecap="round"/><polyline points="979.1,154.1 1116,183.2" fill="none" stroke="#d3dbe5" stroke-width="0.95" stroke-linejoin="round" stroke-linecap="round"/><polyline points="977,163.9 1113.9,193" fill="none" stroke="#d3dbe5" stroke-width="0.95" stroke-linejoin="round" stroke-linecap="round"/><polyline points="974.9,173.7 1111.8,202.8" fill="none" stroke="#d3dbe5" stroke-width="0.95" stroke-linejoin="round" stroke-linecap="round"/><polyline points="972.9,173.3 1006.2,16.8" fill="none" stroke="#d3dbe5" stroke-width="0.95" stroke-linejoin="round" stroke-linecap="round"/><polyline points="984.7,175.8 1017.9,19.3" fill="none" stroke="#d3dbe5" stroke-width="0.95" stroke-linejoin="round" stroke-linecap="round"/><polyline points="996.4,178.3 1029.7,21.8" fill="none" stroke="#d3dbe5" stroke-width="0.95" stroke-linejoin="round" stroke-linecap="round"/><polyline points="1008.2,180.8 1041.4,24.3" fill="none" stroke="#d3dbe5" stroke-width="0.95" stroke-linejoin="round" stroke-linecap="round"/><polyline points="1019.9,183.3 1053.2,26.8" fill="none" stroke="#d3dbe5" stroke-width="0.95" stroke-linejoin="round" stroke-linecap="round"/><polyline points="1031.6,185.8 1064.9,29.3" fill="none" stroke="#d3dbe5" stroke-width="0.95" stroke-linejoin="round" stroke-linecap="round"/><polyline points="1043.4,188.3 1076.6,31.7" fill="none" stroke="#d3dbe5" stroke-width="0.95" stroke-linejoin="round" stroke-linecap="round"/><polyline points="1055.1,190.7 1088.4,34.2" fill="none" stroke="#d3dbe5" stroke-width="0.95" stroke-linejoin="round" stroke-linecap="round"/><polyline points="1066.8,193.2 1100.1,36.7" fill="none" stroke="#d3dbe5" stroke-width="0.95" stroke-linejoin="round" stroke-linecap="round"/><polyline points="1078.6,195.7 1111.8,39.2" fill="none" stroke="#d3dbe5" stroke-width="0.95" stroke-linejoin="round" stroke-linecap="round"/><polyline points="1090.3,198.2 1123.6,41.7" fill="none" stroke="#d3dbe5" stroke-width="0.95" stroke-linejoin="round" stroke-linecap="round"/><polyline points="1102.1,200.7 1135.3,44.2" fill="none" stroke="#d3dbe5" stroke-width="0.95" stroke-linejoin="round" stroke-linecap="round"/><polyline points="1113.8,203.2 1147.1,46.7" fill="none" stroke="#d3dbe5" stroke-width="0.95" stroke-linejoin="round" stroke-linecap="round"/></g><g clip-path="url(#cg)"><polyline points="-72.1,239.3 153.1,109.3" fill="none" stroke="#d3dbe5" stroke-width="0.8" stroke-linejoin="round" stroke-linecap="round"/><polyline points="-66.6,248.8 158.6,118.8" fill="none" stroke="#d3dbe5" stroke-width="0.8" stroke-linejoin="round" stroke-linecap="round"/><polyline points="-61.1,258.3 164.1,128.3" fill="none" stroke="#d3dbe5" stroke-width="0.8" stroke-linejoin="round" stroke-linecap="round"/><polyline points="-55.6,267.8 169.6,137.8" fill="none" stroke="#d3dbe5" stroke-width="0.8" stroke-linejoin="round" stroke-linecap="round"/><polyline points="-50.1,277.4 175.1,147.4" fill="none" stroke="#d3dbe5" stroke-width="0.8" stroke-linejoin="round" stroke-linecap="round"/><polyline points="-44.6,286.9 180.6,156.9" fill="none" stroke="#d3dbe5" stroke-width="0.8" stroke-linejoin="round" stroke-linecap="round"/><polyline points="-39.1,296.4 186.1,166.4" fill="none" stroke="#d3dbe5" stroke-width="0.8" stroke-linejoin="round" stroke-linecap="round"/><polyline points="-33.6,305.9 191.6,175.9" fill="none" stroke="#d3dbe5" stroke-width="0.8" stroke-linejoin="round" stroke-linecap="round"/><polyline points="-28.1,315.5 197.1,185.5" fill="none" stroke="#d3dbe5" stroke-width="0.8" stroke-linejoin="round" stroke-linecap="round"/><polyline points="-22.6,325 202.6,195" fill="none" stroke="#d3dbe5" stroke-width="0.8" stroke-linejoin="round" stroke-linecap="round"/><polyline points="-17.1,334.5 208.1,204.5" fill="none" stroke="#d3dbe5" stroke-width="0.8" stroke-linejoin="round" stroke-linecap="round"/><polyline points="-11.6,344.1 213.6,214.1" fill="none" stroke="#d3dbe5" stroke-width="0.8" stroke-linejoin="round" stroke-linecap="round"/><polyline points="-6.1,353.6 219.1,223.6" fill="none" stroke="#d3dbe5" stroke-width="0.8" stroke-linejoin="round" stroke-linecap="round"/><polyline points="-0.6,363.1 224.6,233.1" fill="none" stroke="#d3dbe5" stroke-width="0.8" stroke-linejoin="round" stroke-linecap="round"/><polyline points="4.9,372.6 230.1,242.6" fill="none" stroke="#d3dbe5" stroke-width="0.8" stroke-linejoin="round" stroke-linecap="round"/><polyline points="10.4,382.2 235.6,252.2" fill="none" stroke="#d3dbe5" stroke-width="0.8" stroke-linejoin="round" stroke-linecap="round"/><polyline points="15.9,391.7 241.1,261.7" fill="none" stroke="#d3dbe5" stroke-width="0.8" stroke-linejoin="round" stroke-linecap="round"/><polyline points="21.4,401.2 246.6,271.2" fill="none" stroke="#d3dbe5" stroke-width="0.8" stroke-linejoin="round" stroke-linecap="round"/><polyline points="26.9,410.7 252.1,280.7" fill="none" stroke="#d3dbe5" stroke-width="0.8" stroke-linejoin="round" stroke-linecap="round"/><polyline points="132,108.7 242,299.3" fill="none" stroke="#d3dbe5" stroke-width="0.8" stroke-linejoin="round" stroke-linecap="round"/><polyline points="118.1,116.7 228.1,307.3" fill="none" stroke="#d3dbe5" stroke-width="0.8" stroke-linejoin="round" stroke-linecap="round"/><polyline points="104.3,124.7 214.3,315.3" fill="none" stroke="#d3dbe5" stroke-width="0.8" stroke-linejoin="round" stroke-linecap="round"/><polyline points="90.4,132.7 200.4,323.3" fill="none" stroke="#d3dbe5" stroke-width="0.8" stroke-linejoin="round" stroke-linecap="round"/><polyline points="76.6,140.7 186.6,331.3" fill="none" stroke="#d3dbe5" stroke-width="0.8" stroke-linejoin="round" stroke-linecap="round"/><polyline points="62.7,148.7 172.7,339.3" fill="none" stroke="#d3dbe5" stroke-width="0.8" stroke-linejoin="round" stroke-linecap="round"/><polyline points="48.9,156.7 158.9,347.3" fill="none" stroke="#d3dbe5" stroke-width="0.8" stroke-linejoin="round" stroke-linecap="round"/><polyline points="35,164.7 145,355.3" fill="none" stroke="#d3dbe5" stroke-width="0.8" stroke-linejoin="round" stroke-linecap="round"/><polyline points="21.1,172.7 131.1,363.3" fill="none" stroke="#d3dbe5" stroke-width="0.8" stroke-linejoin="round" stroke-linecap="round"/><polyline points="7.3,180.7 117.3,371.3" fill="none" stroke="#d3dbe5" stroke-width="0.8" stroke-linejoin="round" stroke-linecap="round"/><polyline points="-6.6,188.7 103.4,379.3" fill="none" stroke="#d3dbe5" stroke-width="0.8" stroke-linejoin="round" stroke-linecap="round"/><polyline points="-20.4,196.7 89.6,387.3" fill="none" stroke="#d3dbe5" stroke-width="0.8" stroke-linejoin="round" stroke-linecap="round"/><polyline points="-34.3,204.7 75.7,395.3" fill="none" stroke="#d3dbe5" stroke-width="0.8" stroke-linejoin="round" stroke-linecap="round"/><polyline points="-48.1,212.7 61.9,403.3" fill="none" stroke="#d3dbe5" stroke-width="0.8" stroke-linejoin="round" stroke-linecap="round"/><polyline points="-62,220.7 48,411.3" fill="none" stroke="#d3dbe5" stroke-width="0.8" stroke-linejoin="round" stroke-linecap="round"/></g><g clip-path="url(#ch)"><polyline points="207.5,24.2 340.7,67.4" fill="none" stroke="#d3dbe5" stroke-width="0.8" stroke-linejoin="round" stroke-linecap="round"/><polyline points="203.5,36.6 336.7,79.8" fill="none" stroke="#d3dbe5" stroke-width="0.8" stroke-linejoin="round" stroke-linecap="round"/><polyline points="199.5,48.9 332.6,92.2" fill="none" stroke="#d3dbe5" stroke-width="0.8" stroke-linejoin="round" stroke-linecap="round"/><polyline points="195.5,61.3 328.6,104.5" fill="none" stroke="#d3dbe5" stroke-width="0.8" stroke-linejoin="round" stroke-linecap="round"/><polyline points="191.5,73.6 324.6,116.9" fill="none" stroke="#d3dbe5" stroke-width="0.8" stroke-linejoin="round" stroke-linecap="round"/><polyline points="187.4,86 320.6,129.3" fill="none" stroke="#d3dbe5" stroke-width="0.8" stroke-linejoin="round" stroke-linecap="round"/><polyline points="183.4,98.4 316.6,141.6" fill="none" stroke="#d3dbe5" stroke-width="0.8" stroke-linejoin="round" stroke-linecap="round"/><polyline points="179.4,110.7 312.6,154" fill="none" stroke="#d3dbe5" stroke-width="0.8" stroke-linejoin="round" stroke-linecap="round"/><polyline points="175.4,123.1 308.5,166.4" fill="none" stroke="#d3dbe5" stroke-width="0.8" stroke-linejoin="round" stroke-linecap="round"/><polyline points="171.4,135.5 304.5,178.7" fill="none" stroke="#d3dbe5" stroke-width="0.8" stroke-linejoin="round" stroke-linecap="round"/><polyline points="167.4,147.8 300.5,191.1" fill="none" stroke="#d3dbe5" stroke-width="0.8" stroke-linejoin="round" stroke-linecap="round"/><polyline points="163.3,160.2 296.5,203.4" fill="none" stroke="#d3dbe5" stroke-width="0.8" stroke-linejoin="round" stroke-linecap="round"/><polyline points="159.3,172.6 292.5,215.8" fill="none" stroke="#d3dbe5" stroke-width="0.8" stroke-linejoin="round" stroke-linecap="round"/><polyline points="157.5,184.6 213.1,13.4" fill="none" stroke="#d3dbe5" stroke-width="0.8" stroke-linejoin="round" stroke-linecap="round"/><polyline points="173.7,189.8 229.3,18.6" fill="none" stroke="#d3dbe5" stroke-width="0.8" stroke-linejoin="round" stroke-linecap="round"/><polyline points="189.9,195.1 245.5,23.9" fill="none" stroke="#d3dbe5" stroke-width="0.8" stroke-linejoin="round" stroke-linecap="round"/><polyline points="206,200.3 261.6,29.2" fill="none" stroke="#d3dbe5" stroke-width="0.8" stroke-linejoin="round" stroke-linecap="round"/><polyline points="222.2,205.6 277.8,34.4" fill="none" stroke="#d3dbe5" stroke-width="0.8" stroke-linejoin="round" stroke-linecap="round"/><polyline points="238.4,210.8 294,39.7" fill="none" stroke="#d3dbe5" stroke-width="0.8" stroke-linejoin="round" stroke-linecap="round"/><polyline points="254.5,216.1 310.1,44.9" fill="none" stroke="#d3dbe5" stroke-width="0.8" stroke-linejoin="round" stroke-linecap="round"/><polyline points="270.7,221.4 326.3,50.2" fill="none" stroke="#d3dbe5" stroke-width="0.8" stroke-linejoin="round" stroke-linecap="round"/><polyline points="286.9,226.6 342.5,55.4" fill="none" stroke="#d3dbe5" stroke-width="0.8" stroke-linejoin="round" stroke-linecap="round"/></g><polyline points="822,310 870,345" fill="none" stroke="#d3dbe5" stroke-width="1.05" stroke-linejoin="round" stroke-linecap="round"/><polyline points="822,200 850,240" fill="none" stroke="#d3dbe5" stroke-width="1.05" stroke-linejoin="round" stroke-linecap="round"/><polyline points="830,262 870,240" fill="none" stroke="#d3dbe5" stroke-width="1.05" stroke-linejoin="round" stroke-linecap="round"/><polyline points="836,300 880,282" fill="none" stroke="#d3dbe5" stroke-width="1.05" stroke-linejoin="round" stroke-linecap="round"/></g><path d="M830 2 Q900 -2 940 14 T1030 52 T1095 84" fill="none" stroke="#dadde1" stroke-width="3.2" stroke-linejoin="round" stroke-linecap="round"/><path d="M1010 80 Q1040 130 1095 140" fill="none" stroke="#dfe2e6" stroke-width="2.4" stroke-linejoin="round" stroke-linecap="round"/><path d="M817 173 Q812 215 808 255 T790 345" fill="none" stroke="#e3e5e8" stroke-width="2.4" stroke-linejoin="round" stroke-linecap="round"/><path d="M0 82 C11.3 84.5 41.8 91.8 68 97 C94.2 102.2 132.5 106.2 157 113 C181.5 119.8 197.8 129.3 215 138 C232.2 146.7 245.8 156.3 260 165 C274.2 173.7 288.3 184.8 300 190 C311.7 195.2 325.0 195.0 330 196" fill="none" stroke="#c5cfdb" stroke-width="3.4" stroke-linejoin="round" stroke-linecap="round"/><path d="M270 50 C265.0 57.0 249.2 77.3 240 92 C230.8 106.7 221.7 124.5 215 138 C208.3 151.5 203.2 165.5 200 173 C196.8 180.5 202.2 177.2 196 183 C189.8 188.8 168.5 203.8 163 208" fill="none" stroke="#c5cfdb" stroke-width="3" stroke-linejoin="round" stroke-linecap="round"/><path d="M105 108 C102.5 113.3 94.5 129.2 90 140 C85.5 150.8 80.0 167.5 78 173" fill="none" stroke="#c5cfdb" stroke-width="2.4" stroke-linejoin="round" stroke-linecap="round"/><path d="M81 173 C86.5 175.7 100.3 183.2 114 189 C127.7 194.8 151.0 201.5 163 208 C175.0 214.5 177.8 216.5 186 228 C194.2 239.5 202.8 259.0 212 277 C221.2 295.0 235.5 324.7 241 336 C246.5 347.3 244.3 343.5 245 345" fill="none" stroke="#c5cfdb" stroke-width="3.4" stroke-linejoin="round" stroke-linecap="round"/><path d="M18 345 C25.0 341.0 40.7 332.0 60 321 C79.3 310.0 112.0 291.7 134 279 C156.0 266.3 178.5 252.7 192 245 C205.5 237.3 206.2 236.5 215 233 C223.8 229.5 235.2 227.5 245 224 C254.8 220.5 263.2 217.7 274 212 C284.8 206.3 300.7 197.8 310 190 C319.3 182.2 325.0 176.7 330 165 C335.0 153.3 337.8 137.5 340 120 C342.2 102.5 342.7 80.0 343 60 C343.3 40.0 342.2 10.0 342 0" fill="none" stroke="#c5cfdb" stroke-width="3.8" stroke-linejoin="round" stroke-linecap="round"/><path d="M134 279 L163 345" fill="none" stroke="#c5cfdb" stroke-width="2.6" stroke-linejoin="round" stroke-linecap="round"/><path d="M343 0 C340.8 10.0 334.2 40.0 330 60 C325.8 80.0 322.0 101.2 318 120 C314.0 138.8 308.0 164.2 306 173" fill="none" stroke="#c5cfdb" stroke-width="3" stroke-linejoin="round" stroke-linecap="round"/><path d="M365 0 C372.5 5.0 395.8 21.7 410 30 C424.2 38.3 438.7 44.5 450 50 C461.3 55.5 473.3 60.8 478 63" fill="none" stroke="#c5cfdb" stroke-width="4.2" stroke-linejoin="round" stroke-linecap="round"/><path d="M378 55 C384.2 58.8 402.8 70.3 415 78 C427.2 85.7 436.8 91.8 451 101 C465.2 110.2 483.8 122.7 500 133 C516.2 143.3 531.3 151.8 548 163 C564.7 174.2 583.2 189.2 600 200 C616.8 210.8 633.5 218.3 649 228 C664.5 237.7 685.7 253.0 693 258" fill="none" stroke="#c5cfdb" stroke-width="4.6" stroke-linejoin="round" stroke-linecap="round"/><path d="M458 0 C458.7 5.0 458.7 19.5 462 30 C465.3 40.5 475.3 57.5 478 63" fill="none" stroke="#c5cfdb" stroke-width="4" stroke-linejoin="round" stroke-linecap="round"/><path d="M478 63 C472.5 70.2 456.5 87.7 445 106 C433.5 124.3 417.5 158.8 409 173 C400.5 187.2 402.3 179.7 394 191 C385.7 202.3 367.0 226.7 359 241 C351.0 255.3 348.5 259.7 346 277 C343.5 294.3 344.3 333.7 344 345" fill="none" stroke="#c5cfdb" stroke-width="4" stroke-linejoin="round" stroke-linecap="round"/><path d="M515 88 C510.8 95.0 498.2 115.8 490 130 C481.8 144.2 474.3 160.3 466 173 C457.7 185.7 448.2 194.7 440 206 C431.8 217.3 424.5 229.2 417 241 C409.5 252.8 399.8 267.2 395 277 C390.2 286.8 388.8 288.7 388 300 C387.2 311.3 389.7 337.5 390 345" fill="none" stroke="#c5cfdb" stroke-width="4" stroke-linejoin="round" stroke-linecap="round"/><path d="M560 125 C554.0 139.0 534.2 188.2 524 209 C513.8 229.8 507.2 237.5 499 250 C490.8 262.5 478.8 268.2 475 284 C471.2 299.8 475.8 334.8 476 345" fill="none" stroke="#c5cfdb" stroke-width="4" stroke-linejoin="round" stroke-linecap="round"/><path d="M602 173 C599.8 176.5 595.3 185.0 589 194 C582.7 203.0 570.8 214.5 564 227 C557.2 239.5 555.5 256.3 548 269 C540.5 281.7 524.5 290.3 519 303 C513.5 315.7 515.7 338.0 515 345" fill="none" stroke="#c5cfdb" stroke-width="4" stroke-linejoin="round" stroke-linecap="round"/><path d="M375 173 C382.5 177.5 404.2 190.5 420 200 C435.8 209.5 448.7 217.2 470 230 C491.3 242.8 526.8 264.0 548 277 C569.2 290.0 587.5 299.2 597 308 C606.5 316.8 603.7 326.3 605 330" fill="none" stroke="#c5cfdb" stroke-width="4" stroke-linejoin="round" stroke-linecap="round"/><path d="M330 180 C336.7 184.2 355.7 195.8 370 205 C384.3 214.2 397.7 222.8 416 235 C434.3 247.2 458.0 263.8 480 278 C502.0 292.2 529.7 308.8 548 320 C566.3 331.2 583.0 340.8 590 345" fill="none" stroke="#c5cfdb" stroke-width="4.6" stroke-linejoin="round" stroke-linecap="round"/><path d="M356 253 C362.7 257.0 382.5 269.7 396 277 C409.5 284.3 424.7 295.3 437 297 C449.3 298.7 463.5 290.3 470 287 C476.5 283.7 475.0 278.7 476 277" fill="none" stroke="#c5cfdb" stroke-width="3.4" stroke-linejoin="round" stroke-linecap="round"/><path d="M241 336 C246.5 335.0 249.5 332.5 274 330 C298.5 327.5 355.3 321.3 388 321 C420.7 320.7 443.3 325.8 470 328 C496.7 330.2 526.3 333.7 548 334 C569.7 334.3 583.7 332.3 600 330 C616.3 327.7 634.0 325.5 646 320 C658.0 314.5 664.2 307.3 672 297 C679.8 286.7 686.0 270.2 693 258 C700.0 245.8 707.8 233.7 714 224 C720.2 214.3 727.3 204.0 730 200" fill="none" stroke="#c5cfdb" stroke-width="4.6" stroke-linejoin="round" stroke-linecap="round"/><path d="M683 173 C677.3 182.2 661.2 209.0 649 228 C636.8 247.0 617.8 272.8 610 287 C602.2 301.2 602.8 305.8 602 313 C601.2 320.2 604.5 327.2 605 330" fill="none" stroke="#c5cfdb" stroke-width="4" stroke-linejoin="round" stroke-linecap="round"/><path d="M548 49 C563.3 58.3 613.8 88.7 640 105 C666.2 121.3 692.7 135.7 705 147 C717.3 158.3 712.2 165.5 714 173 C715.8 180.5 715.7 188.8 716 192" fill="none" stroke="#c5cfdb" stroke-width="3.4" stroke-linejoin="round" stroke-linecap="round"/><path d="M714 224 L822 240" fill="none" stroke="#c5cfdb" stroke-width="2.4" stroke-linejoin="round" stroke-linecap="round"/><path d="M827 194 C830.8 200.0 840.5 217.2 850 230 C859.5 242.8 882.0 259.3 884 271 C886.0 282.7 868.3 291.8 862 300 C855.7 308.2 851.0 312.5 846 320 C841.0 327.5 834.3 340.8 832 345" fill="none" stroke="#c5cfdb" stroke-width="3.8" stroke-linejoin="round" stroke-linecap="round"/><path d="M808 20 C811.7 18.7 819.3 7.7 830 12 C840.7 16.3 857.8 34.7 872 46 C886.2 57.3 899.5 67.7 915 80 C930.5 92.3 949.2 106.7 965 120 C980.8 133.3 993.2 153.3 1010 160 C1026.8 166.7 1056.7 160.0 1066 160" fill="none" stroke="#c5cfdb" stroke-width="3" stroke-linejoin="round" stroke-linecap="round"/><path d="M872 46 C871.5 53.5 871.8 79.2 869 91 C866.2 102.8 861.2 109.7 855 117 C848.8 124.3 837.5 127.8 832 135 C826.5 142.2 823.7 151.5 822 160 C820.3 168.5 822.0 181.7 822 186" fill="none" stroke="#c5cfdb" stroke-width="3" stroke-linejoin="round" stroke-linecap="round"/><path d="M930 14 C941.7 21.7 983.3 45.7 1000 60 C1016.7 74.3 1020.0 85.0 1030 100 C1040.0 115.0 1055.0 141.7 1060 150" fill="none" stroke="#c5cfdb" stroke-width="2.6" stroke-linejoin="round" stroke-linecap="round"/><path d="M960 232 C965.0 226.7 981.7 212.0 990 200 C998.3 188.0 1006.3 173.3 1010 160 C1013.7 146.7 1011.7 126.7 1012 120" fill="none" stroke="#c5cfdb" stroke-width="2.6" stroke-linejoin="round" stroke-linecap="round"/><path d="M900 140 C908.7 139.5 935.3 132.8 952 137 C968.7 141.2 992.0 160.3 1000 165" fill="none" stroke="#c5cfdb" stroke-width="2.6" stroke-linejoin="round" stroke-linecap="round"/><path d="M180 0 C195.7 7.5 247.5 30.7 274 45 C300.5 59.3 317.2 72.0 339 86 C360.8 100.0 382.7 114.5 404.5 129 C426.3 143.5 446.1 157.8 470 173 C493.9 188.2 519.8 202.0 548 220 C576.2 238.0 610.2 261.7 639 281 C667.8 300.3 705.2 325.3 721 336 C736.8 346.7 731.8 343.5 734 345" fill="none" stroke="#7795b6" stroke-width="6" stroke-linejoin="round" stroke-linecap="round"/><path d="M318 100 q4 -10 18 -13 M330 75 q12 0 22 10 M424 146 q10 2 17 13 M438 131 q10 5 18 17 M640 290 l40 2 M650 282 q20 0 40 24" fill="none" stroke="#7795b6" stroke-width="2.2" stroke-linejoin="round" stroke-linecap="round"/><path d="M478 63 C484.2 67.2 503.3 80.2 515 88 C526.7 95.8 533.8 100.8 548 110 C562.2 119.2 583.2 132.5 600 143 C616.8 153.5 636.0 165.7 649 173 C662.0 180.3 666.3 183.7 678 187 C689.7 190.3 703.7 192.5 719 193 C734.3 193.5 752.8 191.2 770 190 C787.2 188.8 809.8 187.0 822 186 C834.2 185.0 831.7 182.5 843 184 C854.3 185.5 876.7 193.7 890 195 C903.3 196.3 911.8 194.5 923 192 C934.2 189.5 946.7 179.0 957 180 C967.3 181.0 976.0 191.7 985 198 C994.0 204.3 1006.7 214.7 1011 218" fill="none" stroke="#7795b6" stroke-width="4.4" stroke-linejoin="round" stroke-linecap="round"/><path d="M535 0 C536.0 5.0 540.8 20.0 541 30 C541.2 40.0 540.3 50.3 536 60 C531.7 69.7 518.5 83.3 515 88" fill="none" stroke="#7795b6" stroke-width="5.6" stroke-linejoin="round" stroke-linecap="round"/><path d="M1095 155 C1090.8 155.3 1074.7 154.0 1070 157 C1065.3 160.0 1072.0 166.5 1067 173 C1062.0 179.5 1049.3 188.5 1040 196 C1030.7 203.5 1022.8 209.8 1011 218 C999.2 226.2 983.7 233.0 969 245 C954.3 257.0 937.2 273.3 923 290 C908.8 306.7 890.5 335.8 884 345" fill="none" stroke="#7795b6" stroke-width="5" stroke-linejoin="round" stroke-linecap="round"/><path d="M969 245 C974.3 249.3 986.8 260.5 1001 271 C1015.2 281.5 1038.3 298.2 1054 308 C1069.7 317.8 1088.2 326.3 1095 330" fill="none" stroke="#7795b6" stroke-width="5" stroke-linejoin="round" stroke-linecap="round"/><path d="M0 290 C4.2 294.2 17.2 305.8 25 315 C32.8 324.2 43.3 340.0 47 345" fill="none" stroke="#7795b6" stroke-width="4.6" stroke-linejoin="round" stroke-linecap="round"/><path d="M180 0 C195.7 7.5 247.5 30.7 274 45 C300.5 59.3 317.2 72.0 339 86 C360.8 100.0 382.7 114.5 404.5 129 C426.3 143.5 446.1 157.8 470 173 C493.9 188.2 519.8 202.0 548 220 C576.2 238.0 610.2 261.7 639 281 C667.8 300.3 705.2 325.3 721 336 C736.8 346.7 731.8 343.5 734 345" fill="none" stroke="#8ea6c4" stroke-width="3.8" stroke-linejoin="round" stroke-linecap="round"/><path d="M478 63 C484.2 67.2 503.3 80.2 515 88 C526.7 95.8 533.8 100.8 548 110 C562.2 119.2 583.2 132.5 600 143 C616.8 153.5 636.0 165.7 649 173 C662.0 180.3 666.3 183.7 678 187 C689.7 190.3 703.7 192.5 719 193 C734.3 193.5 752.8 191.2 770 190 C787.2 188.8 809.8 187.0 822 186 C834.2 185.0 831.7 182.5 843 184 C854.3 185.5 876.7 193.7 890 195 C903.3 196.3 911.8 194.5 923 192 C934.2 189.5 946.7 179.0 957 180 C967.3 181.0 976.0 191.7 985 198 C994.0 204.3 1006.7 214.7 1011 218" fill="none" stroke="#8ea6c4" stroke-width="2.2" stroke-linejoin="round" stroke-linecap="round"/><path d="M535 0 C536.0 5.0 540.8 20.0 541 30 C541.2 40.0 540.3 50.3 536 60 C531.7 69.7 518.5 83.3 515 88" fill="none" stroke="#8ea6c4" stroke-width="3.4" stroke-linejoin="round" stroke-linecap="round"/><path d="M1095 155 C1090.8 155.3 1074.7 154.0 1070 157 C1065.3 160.0 1072.0 166.5 1067 173 C1062.0 179.5 1049.3 188.5 1040 196 C1030.7 203.5 1022.8 209.8 1011 218 C999.2 226.2 983.7 233.0 969 245 C954.3 257.0 937.2 273.3 923 290 C908.8 306.7 890.5 335.8 884 345" fill="none" stroke="#8ea6c4" stroke-width="2.8" stroke-linejoin="round" stroke-linecap="round"/><path d="M969 245 C974.3 249.3 986.8 260.5 1001 271 C1015.2 281.5 1038.3 298.2 1054 308 C1069.7 317.8 1088.2 326.3 1095 330" fill="none" stroke="#8ea6c4" stroke-width="2.8" stroke-linejoin="round" stroke-linecap="round"/><path d="M0 290 C4.2 294.2 17.2 305.8 25 315 C32.8 324.2 43.3 340.0 47 345" fill="none" stroke="#8ea6c4" stroke-width="2.4" stroke-linejoin="round" stroke-linecap="round"/><circle cx="478" cy="63" r="3.400" fill="#f4f3f3" stroke="#c5cfdb" stroke-width="3"/><circle cx="719" cy="193" r="2.600" fill="#e9edf2" stroke="#7795b6" stroke-width="1.600"/><rect x="228" y="20.4" width="19" height="9.8" rx="1" fill="#5f9a43"/><text x="237.5" y="27.7" font-size="6.8" fill="#fff" text-anchor="middle" font-weight="700" textLength="14" lengthAdjust="spacingAndGlyphs">E-75</text><rect x="441" y="155.8" width="19" height="9.8" rx="1" fill="#5f9a43"/><text x="450.5" y="163.1" font-size="6.8" fill="#fff" text-anchor="middle" font-weight="700" textLength="14" lengthAdjust="spacingAndGlyphs">E-75</text><rect x="629.2" y="278.2" width="19.6" height="9.8" rx="1" fill="#5f9a43"/><text x="639" y="285.5" font-size="6.8" fill="#fff" text-anchor="middle" font-weight="700" textLength="14.6" lengthAdjust="spacingAndGlyphs">E-75</text><rect x="1013.2" y="204.8" width="19.2" height="9.8" rx="1" fill="#5f9a43"/><text x="1022.8" y="212.1" font-size="6.8" fill="#fff" text-anchor="middle" font-weight="700" textLength="14.2" lengthAdjust="spacingAndGlyphs">E-70</text><rect x="977.3" y="256" width="17.7" height="10.3" rx="1" fill="#f6d244"/><text x="986.15" y="263.8" font-size="6.8" fill="#3a3a3a" text-anchor="middle" font-weight="700" textLength="12.7" lengthAdjust="spacingAndGlyphs">100</text><rect x="1071.6" y="320.6" width="17.9" height="11.4" rx="1" fill="#f6d244"/><text x="1080.55" y="329.5" font-size="6.8" fill="#3a3a3a" text-anchor="middle" font-weight="700" textLength="12.9" lengthAdjust="spacingAndGlyphs">100</text><text x="68" y="96.5" font-size="8" fill="#66717d" textLength="80" lengthAdjust="spacingAndGlyphs" transform="rotate(14 68 96.5)" stroke="#fff" stroke-width="2" stroke-opacity=".85" paint-order="stroke" stroke-linejoin="round">Marka Čelebonovića</text><text x="91" y="184.5" font-size="8" fill="#66717d" textLength="56" lengthAdjust="spacingAndGlyphs" transform="rotate(21 91 184.5)" stroke="#fff" stroke-width="2" stroke-opacity=".85" paint-order="stroke" stroke-linejoin="round">Ljubinke Bobić</text><text x="3" y="292" font-size="8" fill="#66717d" textLength="32" lengthAdjust="spacingAndGlyphs" transform="rotate(52 3 292)" stroke="#fff" stroke-width="2" stroke-opacity=".85" paint-order="stroke" stroke-linejoin="round">určinska</text><text x="384" y="8" font-size="8" fill="#66717d" textLength="62" lengthAdjust="spacingAndGlyphs" transform="rotate(34 384 8)" stroke="#fff" stroke-width="2" stroke-opacity=".85" paint-order="stroke" stroke-linejoin="round">Pariske komune</text><text x="318" y="150" font-size="8" fill="#66717d" textLength="46" lengthAdjust="spacingAndGlyphs" transform="rotate(-81 318 150)" stroke="#fff" stroke-width="2" stroke-opacity=".85" paint-order="stroke" stroke-linejoin="round">Tošin bunar</text><text x="474" y="122" font-size="8" fill="#66717d" textLength="86" lengthAdjust="spacingAndGlyphs" transform="rotate(33 474 122)" stroke="#fff" stroke-width="2" stroke-opacity=".85" paint-order="stroke" stroke-linejoin="round">Bulevar Zorana Đinđića</text><text x="462" y="0" font-size="8" fill="#66717d" textLength="31" lengthAdjust="spacingAndGlyphs" transform="rotate(80 462 0)" stroke="#fff" stroke-width="2" stroke-opacity=".85" paint-order="stroke" stroke-linejoin="round">a Pupina</text><text x="533" y="-2" font-size="8" fill="#66717d" textLength="22" lengthAdjust="spacingAndGlyphs" transform="rotate(80 533 -2)" stroke="#fff" stroke-width="2" stroke-opacity=".85" paint-order="stroke" stroke-linejoin="round">Tesle</text><text x="551" y="112" font-size="8" fill="#66717d" textLength="96" lengthAdjust="spacingAndGlyphs" transform="rotate(31 551 112)" stroke="#fff" stroke-width="2" stroke-opacity=".85" paint-order="stroke" stroke-linejoin="round">Bulevar Mihajla Pupina</text><text x="307" y="327.5" font-size="8" fill="#66717d" textLength="57" lengthAdjust="spacingAndGlyphs" transform="rotate(-2.5 307 327.5)" stroke="#fff" stroke-width="2" stroke-opacity=".85" paint-order="stroke" stroke-linejoin="round">Jurija Gagarina</text><text x="419" y="232" font-size="8" fill="#66717d" textLength="100" lengthAdjust="spacingAndGlyphs" transform="rotate(34 419 232)" stroke="#fff" stroke-width="2" stroke-opacity=".85" paint-order="stroke" stroke-linejoin="round">Bulevar Heroja sa Košara</text><text x="721" y="227" font-size="8" fill="#66717d" textLength="54" lengthAdjust="spacingAndGlyphs" transform="rotate(8 721 227)" stroke="#fff" stroke-width="2" stroke-opacity=".85" paint-order="stroke" stroke-linejoin="round">Zemunski put</text><text x="803.5" y="236" font-size="8.5" fill="#3a9cc0" textLength="21" lengthAdjust="spacingAndGlyphs" transform="rotate(-90 803.5 236)">Sava</text><text x="913" y="9.5" font-size="8" fill="#66717d" textLength="37" lengthAdjust="spacingAndGlyphs" transform="rotate(26 913 9.5)" stroke="#fff" stroke-width="2" stroke-opacity=".85" paint-order="stroke" stroke-linejoin="round">Dunavska</text><text x="906" y="72" font-size="8" fill="#66717d" textLength="50" lengthAdjust="spacingAndGlyphs" transform="rotate(38 906 72)" stroke="#fff" stroke-width="2" stroke-opacity=".85" paint-order="stroke" stroke-linejoin="round">Cara Dušana</text><text x="938" y="151" font-size="8" fill="#66717d" textLength="40" lengthAdjust="spacingAndGlyphs" transform="rotate(-38 938 151)" stroke="#fff" stroke-width="2" stroke-opacity=".85" paint-order="stroke" stroke-linejoin="round">Francuska</text><text x="966" y="167.5" font-size="8" fill="#66717d" textLength="96" lengthAdjust="spacingAndGlyphs" transform="rotate(-3.5 966 167.5)" stroke="#fff" stroke-width="2" stroke-opacity=".85" paint-order="stroke" stroke-linejoin="round">Bulevar despota Stefana</text><text x="848" y="216" font-size="8" fill="#66717d" textLength="50" lengthAdjust="spacingAndGlyphs" transform="rotate(56 848 216)" stroke="#fff" stroke-width="2" stroke-opacity=".85" paint-order="stroke" stroke-linejoin="round">Karađorđeva</text><text x="1071" y="176" font-size="8" fill="#66717d" textLength="35" lengthAdjust="spacingAndGlyphs" transform="rotate(78 1071 176)" stroke="#fff" stroke-width="2" stroke-opacity=".85" paint-order="stroke" stroke-linejoin="round">Cvijićeva</text><text x="1072.4" y="105" font-size="8" fill="#66717d" textLength="22" lengthAdjust="spacingAndGlyphs" stroke="#fff" stroke-width="2" stroke-opacity=".85" paint-order="stroke" stroke-linejoin="round">Duna</text><text font-size="8" fill="#66717d" stroke="#fff" stroke-width="2" stroke-opacity=".85" paint-order="stroke"><textPath href="#bj" textLength="98" lengthAdjust="spacingAndGlyphs">Bulevar vojvode Bojovića</textPath></text><text x="124.8" y="131.024" font-size="8.4" fill="#fff" text-anchor="middle" textLength="65" lengthAdjust="spacing" stroke="#fff" stroke-width="2.4" stroke-opacity=".85" paint-order="stroke" stroke-linejoin="round">BEŽANIJSKA</text><text x="124.8" y="131.024" font-size="8.4" fill="#464b51" text-anchor="middle" textLength="65" lengthAdjust="spacing" stroke="#464b51" stroke-width=".3">BEŽANIJSKA</text><text x="124.8" y="142.124" font-size="8.4" fill="#fff" text-anchor="middle" textLength="27" lengthAdjust="spacing" stroke="#fff" stroke-width="2.4" stroke-opacity=".85" paint-order="stroke" stroke-linejoin="round">KOSA</text><text x="124.8" y="142.124" font-size="8.4" fill="#464b51" text-anchor="middle" textLength="27" lengthAdjust="spacing" stroke="#464b51" stroke-width=".3">KOSA</text><text x="124.8" y="153.224" font-size="8.4" fill="#fff" text-anchor="middle" textLength="73" lengthAdjust="spacing" stroke="#fff" stroke-width="2.4" stroke-opacity=".85" paint-order="stroke" stroke-linejoin="round">БЕЖАНИЈСКА</text><text x="124.8" y="153.224" font-size="8.4" fill="#464b51" text-anchor="middle" textLength="73" lengthAdjust="spacing" stroke="#464b51" stroke-width=".3">БЕЖАНИЈСКА</text><text x="124.8" y="164.324" font-size="8.4" fill="#fff" text-anchor="middle" textLength="28" lengthAdjust="spacing" stroke="#fff" stroke-width="2.4" stroke-opacity=".85" paint-order="stroke" stroke-linejoin="round">КОСА</text><text x="124.8" y="164.324" font-size="8.4" fill="#464b51" text-anchor="middle" textLength="28" lengthAdjust="spacing" stroke="#464b51" stroke-width=".3">КОСА</text><text x="347.4" y="39.024" font-size="8.4" fill="#fff" text-anchor="middle" textLength="65" lengthAdjust="spacing" stroke="#fff" stroke-width="2.4" stroke-opacity=".85" paint-order="stroke" stroke-linejoin="round">STUDENTSKI</text><text x="347.4" y="39.024" font-size="8.4" fill="#464b51" text-anchor="middle" textLength="65" lengthAdjust="spacing" stroke="#464b51" stroke-width=".3">STUDENTSKI</text><text x="347.4" y="50.124" font-size="8.4" fill="#fff" text-anchor="middle" textLength="88" lengthAdjust="spacing" stroke="#fff" stroke-width="2.4" stroke-opacity=".85" paint-order="stroke" stroke-linejoin="round">GRAD, BELGRADE</text><text x="347.4" y="50.124" font-size="8.4" fill="#464b51" text-anchor="middle" textLength="88" lengthAdjust="spacing" stroke="#464b51" stroke-width=".3">GRAD, BELGRADE</text><text x="347.4" y="61.224" font-size="8.4" fill="#fff" text-anchor="middle" textLength="70" lengthAdjust="spacing" stroke="#fff" stroke-width="2.4" stroke-opacity=".85" paint-order="stroke" stroke-linejoin="round">СТУДЕНТСКИ</text><text x="347.4" y="61.224" font-size="8.4" fill="#464b51" text-anchor="middle" textLength="70" lengthAdjust="spacing" stroke="#464b51" stroke-width=".3">СТУДЕНТСКИ</text><text x="347.4" y="72.324" font-size="8.4" fill="#fff" text-anchor="middle" textLength="27" lengthAdjust="spacing" stroke="#fff" stroke-width="2.4" stroke-opacity=".85" paint-order="stroke" stroke-linejoin="round">ГРАД</text><text x="347.4" y="72.324" font-size="8.4" fill="#464b51" text-anchor="middle" textLength="27" lengthAdjust="spacing" stroke="#464b51" stroke-width=".3">ГРАД</text><text x="397.5" y="142.024" font-size="8.4" fill="#fff" text-anchor="middle" textLength="43" lengthAdjust="spacing" stroke="#fff" stroke-width="2.4" stroke-opacity=".85" paint-order="stroke" stroke-linejoin="round">BLOK 38</text><text x="397.5" y="142.024" font-size="8.4" fill="#464b51" text-anchor="middle" textLength="43" lengthAdjust="spacing" stroke="#464b51" stroke-width=".3">BLOK 38</text><text x="397.5" y="152.824" font-size="8.4" fill="#fff" text-anchor="middle" textLength="44" lengthAdjust="spacing" stroke="#fff" stroke-width="2.4" stroke-opacity=".85" paint-order="stroke" stroke-linejoin="round">БЛОК 38</text><text x="397.5" y="152.824" font-size="8.4" fill="#464b51" text-anchor="middle" textLength="44" lengthAdjust="spacing" stroke="#464b51" stroke-width=".3">БЛОК 38</text><text x="219" y="183.024" font-size="8.4" fill="#fff" text-anchor="middle" textLength="43" lengthAdjust="spacing" stroke="#fff" stroke-width="2.4" stroke-opacity=".85" paint-order="stroke" stroke-linejoin="round">BLOK 60</text><text x="219" y="183.024" font-size="8.4" fill="#464b51" text-anchor="middle" textLength="43" lengthAdjust="spacing" stroke="#464b51" stroke-width=".3">BLOK 60</text><text x="219" y="194.124" font-size="8.4" fill="#fff" text-anchor="middle" textLength="44" lengthAdjust="spacing" stroke="#fff" stroke-width="2.4" stroke-opacity=".85" paint-order="stroke" stroke-linejoin="round">БЛОК 60</text><text x="219" y="194.124" font-size="8.4" fill="#464b51" text-anchor="middle" textLength="44" lengthAdjust="spacing" stroke="#464b51" stroke-width=".3">БЛОК 60</text><text x="276.5" y="261.024" font-size="8.4" fill="#fff" text-anchor="middle" textLength="48" lengthAdjust="spacing" stroke="#fff" stroke-width="2.4" stroke-opacity=".85" paint-order="stroke" stroke-linejoin="round">BLOCK 64</text><text x="276.5" y="261.024" font-size="8.4" fill="#464b51" text-anchor="middle" textLength="48" lengthAdjust="spacing" stroke="#464b51" stroke-width=".3">BLOCK 64</text><text x="276.5" y="272.124" font-size="8.4" fill="#fff" text-anchor="middle" textLength="44" lengthAdjust="spacing" stroke="#fff" stroke-width="2.4" stroke-opacity=".85" paint-order="stroke" stroke-linejoin="round">БЛОК 64</text><text x="276.5" y="272.124" font-size="8.4" fill="#464b51" text-anchor="middle" textLength="44" lengthAdjust="spacing" stroke="#464b51" stroke-width=".3">БЛОК 64</text><text x="189.2" y="302.024" font-size="8.4" fill="#fff" text-anchor="middle" textLength="49" lengthAdjust="spacing" stroke="#fff" stroke-width="2.4" stroke-opacity=".85" paint-order="stroke" stroke-linejoin="round">BLOCK 63</text><text x="189.2" y="302.024" font-size="8.4" fill="#464b51" text-anchor="middle" textLength="49" lengthAdjust="spacing" stroke="#464b51" stroke-width=".3">BLOCK 63</text><text x="189.2" y="313.124" font-size="8.4" fill="#fff" text-anchor="middle" textLength="44" lengthAdjust="spacing" stroke="#fff" stroke-width="2.4" stroke-opacity=".85" paint-order="stroke" stroke-linejoin="round">БЛОК 63</text><text x="189.2" y="313.124" font-size="8.4" fill="#464b51" text-anchor="middle" textLength="44" lengthAdjust="spacing" stroke="#464b51" stroke-width=".3">БЛОК 63</text><text x="476.6" y="210.624" font-size="8.4" fill="#fff" text-anchor="middle" textLength="43" lengthAdjust="spacing" stroke="#fff" stroke-width="2.4" stroke-opacity=".85" paint-order="stroke" stroke-linejoin="round">BLOK 28</text><text x="476.6" y="210.624" font-size="8.4" fill="#464b51" text-anchor="middle" textLength="43" lengthAdjust="spacing" stroke="#464b51" stroke-width=".3">BLOK 28</text><text x="476.6" y="221.724" font-size="8.4" fill="#fff" text-anchor="middle" textLength="44" lengthAdjust="spacing" stroke="#fff" stroke-width="2.4" stroke-opacity=".85" paint-order="stroke" stroke-linejoin="round">БЛОК 28</text><text x="476.6" y="221.724" font-size="8.4" fill="#464b51" text-anchor="middle" textLength="44" lengthAdjust="spacing" stroke="#464b51" stroke-width=".3">БЛОК 28</text><text x="636" y="189.024" font-size="8.4" fill="#fff" text-anchor="middle" textLength="43" lengthAdjust="spacing" stroke="#fff" stroke-width="2.4" stroke-opacity=".85" paint-order="stroke" stroke-linejoin="round">BLOK 21</text><text x="636" y="189.024" font-size="8.4" fill="#464b51" text-anchor="middle" textLength="43" lengthAdjust="spacing" stroke="#464b51" stroke-width=".3">BLOK 21</text><text x="636" y="200.424" font-size="8.4" fill="#fff" text-anchor="middle" textLength="44" lengthAdjust="spacing" stroke="#fff" stroke-width="2.4" stroke-opacity=".85" paint-order="stroke" stroke-linejoin="round">БЛОК 21</text><text x="636" y="200.424" font-size="8.4" fill="#464b51" text-anchor="middle" textLength="44" lengthAdjust="spacing" stroke="#464b51" stroke-width=".3">БЛОК 21</text><text x="600" y="226.624" font-size="8.4" fill="#fff" text-anchor="middle" textLength="43" lengthAdjust="spacing" stroke="#fff" stroke-width="2.4" stroke-opacity=".85" paint-order="stroke" stroke-linejoin="round">BLOK 22</text><text x="600" y="226.624" font-size="8.4" fill="#464b51" text-anchor="middle" textLength="43" lengthAdjust="spacing" stroke="#464b51" stroke-width=".3">BLOK 22</text><text x="600" y="238.024" font-size="8.4" fill="#fff" text-anchor="middle" textLength="44" lengthAdjust="spacing" stroke="#fff" stroke-width="2.4" stroke-opacity=".85" paint-order="stroke" stroke-linejoin="round">БЛОК 22</text><text x="600" y="238.024" font-size="8.4" fill="#464b51" text-anchor="middle" textLength="44" lengthAdjust="spacing" stroke="#464b51" stroke-width=".3">БЛОК 22</text><text x="578.2" y="269.324" font-size="8.4" fill="#fff" text-anchor="middle" textLength="43" lengthAdjust="spacing" stroke="#fff" stroke-width="2.4" stroke-opacity=".85" paint-order="stroke" stroke-linejoin="round">BLOK 23</text><text x="578.2" y="269.324" font-size="8.4" fill="#464b51" text-anchor="middle" textLength="43" lengthAdjust="spacing" stroke="#464b51" stroke-width=".3">BLOK 23</text><text x="578.2" y="280.424" font-size="8.4" fill="#fff" text-anchor="middle" textLength="44" lengthAdjust="spacing" stroke="#fff" stroke-width="2.4" stroke-opacity=".85" paint-order="stroke" stroke-linejoin="round">БЛОК 23</text><text x="578.2" y="280.424" font-size="8.4" fill="#464b51" text-anchor="middle" textLength="44" lengthAdjust="spacing" stroke="#464b51" stroke-width=".3">БЛОК 23</text><text x="628" y="298.024" font-size="8.4" fill="#fff" text-anchor="middle" textLength="50" lengthAdjust="spacing" stroke="#fff" stroke-width="2.4" stroke-opacity=".85" paint-order="stroke" stroke-linejoin="round">BLOK 19A</text><text x="628" y="298.024" font-size="8.4" fill="#464b51" text-anchor="middle" textLength="50" lengthAdjust="spacing" stroke="#464b51" stroke-width=".3">BLOK 19A</text><text x="628" y="309.124" font-size="8.4" fill="#fff" text-anchor="middle" textLength="51" lengthAdjust="spacing" stroke="#fff" stroke-width="2.4" stroke-opacity=".85" paint-order="stroke" stroke-linejoin="round">БЛОК 19A</text><text x="628" y="309.124" font-size="8.4" fill="#464b51" text-anchor="middle" textLength="51" lengthAdjust="spacing" stroke="#464b51" stroke-width=".3">БЛОК 19A</text><text x="699.7" y="153.024" font-size="8.4" fill="#fff" text-anchor="middle" textLength="27" lengthAdjust="spacing" stroke="#fff" stroke-width="2.4" stroke-opacity=".85" paint-order="stroke" stroke-linejoin="round">UŠĆE</text><text x="699.7" y="153.024" font-size="8.4" fill="#464b51" text-anchor="middle" textLength="27" lengthAdjust="spacing" stroke="#464b51" stroke-width=".3">UŠĆE</text><text x="917.4" y="48.724" font-size="8.4" fill="#fff" text-anchor="middle" textLength="42" lengthAdjust="spacing" stroke="#fff" stroke-width="2.4" stroke-opacity=".85" paint-order="stroke" stroke-linejoin="round">DORĆOL</text><text x="917.4" y="48.724" font-size="8.4" fill="#464b51" text-anchor="middle" textLength="42" lengthAdjust="spacing" stroke="#464b51" stroke-width=".3">DORĆOL</text><text x="917.4" y="59.824" font-size="8.4" fill="#fff" text-anchor="middle" textLength="45" lengthAdjust="spacing" stroke="#fff" stroke-width="2.4" stroke-opacity=".85" paint-order="stroke" stroke-linejoin="round">ДОРЋОЛ</text><text x="917.4" y="59.824" font-size="8.4" fill="#464b51" text-anchor="middle" textLength="45" lengthAdjust="spacing" stroke="#464b51" stroke-width=".3">ДОРЋОЛ</text><text x="305.5" y="168.456" font-size="9.6" fill="#fff" text-anchor="middle" textLength="95" lengthAdjust="spacing" stroke="#fff" stroke-width="2.4" stroke-opacity=".85" paint-order="stroke" stroke-linejoin="round">NEW BELGRADE</text><text x="305.5" y="168.456" font-size="9.6" fill="#464b51" text-anchor="middle" textLength="95" lengthAdjust="spacing" stroke="#464b51" stroke-width=".3">NEW BELGRADE</text><text x="305.5" y="181.456" font-size="9.6" fill="#fff" text-anchor="middle" textLength="95" lengthAdjust="spacing" stroke="#fff" stroke-width="2.4" stroke-opacity=".85" paint-order="stroke" stroke-linejoin="round">НОВИ БЕОГРАД</text><text x="305.5" y="181.456" font-size="9.6" fill="#464b51" text-anchor="middle" textLength="95" lengthAdjust="spacing" stroke="#464b51" stroke-width=".3">НОВИ БЕОГРАД</text><text x="893" y="213" font-size="15.5" fill="#2b2e33" textLength="63" lengthAdjust="spacingAndGlyphs" stroke="#fff" stroke-width="2.6" stroke-opacity=".85" paint-order="stroke" stroke-linejoin="round">Belgrade</text><text x="893" y="232" font-size="15.5" fill="#2b2e33" textLength="62" lengthAdjust="spacingAndGlyphs" stroke="#fff" stroke-width="2.6" stroke-opacity=".85" paint-order="stroke" stroke-linejoin="round">Београд</text><text x="893" y="213" font-size="15.5" fill="#2b2e33" textLength="63" lengthAdjust="spacingAndGlyphs" stroke="#2b2e33" stroke-width=".2">Belgrade</text><text x="893" y="232" font-size="15.5" fill="#2b2e33" textLength="62" lengthAdjust="spacingAndGlyphs" stroke="#2b2e33" stroke-width=".2">Београд</text><text x="0" y="155" font-size="8.5" fill="#6b7f8c" textLength="16" lengthAdjust="spacingAndGlyphs" stroke="#fff" stroke-width="2" stroke-opacity=".85" paint-order="stroke" stroke-linejoin="round">ско</text><text x="0" y="168" font-size="8.5" fill="#6b7f8c" textLength="16" lengthAdjust="spacingAndGlyphs" stroke="#fff" stroke-width="2" stroke-opacity=".85" paint-order="stroke" stroke-linejoin="round">оље</text><text x="174.5" y="48" font-size="10.5" fill="#3d85e8" textLength="52.2" lengthAdjust="spacingAndGlyphs" stroke="#fff" stroke-width="2" stroke-opacity=".85" paint-order="stroke" stroke-linejoin="round">Emmezeta</text><g transform="translate(242.2 42.7)"><path d="M-6.330 7.280 L-1.100 11.900 Q0 12.900 1.100 11.900 L6.330 7.280 A9.650 9.650 0 1 0 -6.330 7.280 Z" fill="#3c2f1a" fill-opacity=".2" transform="translate(0 .8) scale(1.030)"/><path d="M-6.330 7.280 L-1.100 11.900 Q0 12.900 1.100 11.900 L6.330 7.280 A9.650 9.650 0 1 0 -6.330 7.280 Z" fill="#fff"/><circle r="8.2" fill="#2b9af3"/><g transform="scale(1.080)"><path d="M-1.900 -4.400h3.800l2.100 7.600h-8z" fill="#fff"/><ellipse cx="0" cy="-2.300" rx="1" ry=".75" fill="#2b9af3"/><path d="M-1.800 0a1.800 1.500 0 0 0 3.600 0" fill="none" stroke="#2b9af3" stroke-opacity=".55" stroke-width=".9"/></g></g><text x="212" y="102.8" font-size="10.5" fill="#e3792f" textLength="74" lengthAdjust="spacingAndGlyphs" stroke="#fff" stroke-width="2" stroke-opacity=".85" paint-order="stroke" stroke-linejoin="round">Dolly Bell Java</text><g transform="translate(298.5 98)"><path d="M-6.330 7.280 L-1.100 11.900 Q0 12.900 1.100 11.900 L6.330 7.280 A9.650 9.650 0 1 0 -6.330 7.280 Z" fill="#3c2f1a" fill-opacity=".2" transform="translate(0 .8) scale(1.030)"/><path d="M-6.330 7.280 L-1.100 11.900 Q0 12.900 1.100 11.900 L6.330 7.280 A9.650 9.650 0 1 0 -6.330 7.280 Z" fill="#fff"/><circle r="8.2" fill="#f5803a"/><g transform="scale(1.080)"><path d="M-2.900 -4.200v2.600a1.300 1.300 0 0 0 2.600 0v-2.600M-1.600 -4.200v8.400M2.300 4.200v-8.400c-1.300.5-1.900 1.900-1.900 3.400 0 1 .6 1.700 1.900 1.900" fill="none" stroke="#fff" stroke-width="1.200" stroke-linecap="round" stroke-linejoin="round"/></g></g><text x="392" y="102.4" font-size="10.5" fill="#3d85e8" textLength="80" lengthAdjust="spacingAndGlyphs" stroke="#fff" stroke-width="2" stroke-opacity=".85" paint-order="stroke" stroke-linejoin="round">Mercator Centar</text><g transform="translate(487 97)"><path d="M-6.330 7.280 L-1.100 11.900 Q0 12.900 1.100 11.900 L6.330 7.280 A9.650 9.650 0 1 0 -6.330 7.280 Z" fill="#3c2f1a" fill-opacity=".2" transform="translate(0 .8) scale(1.030)"/><path d="M-6.330 7.280 L-1.100 11.900 Q0 12.900 1.100 11.900 L6.330 7.280 A9.650 9.650 0 1 0 -6.330 7.280 Z" fill="#fff"/><circle r="8.2" fill="#2b9af3"/><g transform="scale(1.080)"><path d="M-1.900 -4.400h3.800l2.100 7.600h-8z" fill="#fff"/><ellipse cx="0" cy="-2.300" rx="1" ry=".75" fill="#2b9af3"/><path d="M-1.800 0a1.800 1.500 0 0 0 3.600 0" fill="none" stroke="#2b9af3" stroke-opacity=".55" stroke-width=".9"/></g></g><g transform="translate(31 155.8)"><path d="M-6.330 7.280 L-1.100 11.900 Q0 12.900 1.100 11.900 L6.330 7.280 A9.650 9.650 0 1 0 -6.330 7.280 Z" fill="#3c2f1a" fill-opacity=".2" transform="translate(0 .8) scale(1.030)"/><path d="M-6.330 7.280 L-1.100 11.900 Q0 12.900 1.100 11.900 L6.330 7.280 A9.650 9.650 0 1 0 -6.330 7.280 Z" fill="#fff"/><circle r="8.2" fill="#7892a3"/><g transform="scale(1.080)"><path d="M-.9 -4.200h1.800l.5 5h-2.800zM-3.600 1.600h7.200v1.600h-7.200z" fill="#fff"/></g></g><text x="42.7" y="242.8" font-size="10.5" fill="#e3792f" textLength="90.7" lengthAdjust="spacingAndGlyphs" stroke="#fff" stroke-width="2" stroke-opacity=".85" paint-order="stroke" stroke-linejoin="round">Kesten Restaurant</text><text x="106.8" y="254" font-size="8.3" fill="#e3792f" textLength="26.6" lengthAdjust="spacingAndGlyphs" stroke="#fff" stroke-width="2" stroke-opacity=".85" paint-order="stroke" stroke-linejoin="round">Kesten</text><g transform="translate(147.8 242.3)"><path d="M-6.330 7.280 L-1.100 11.900 Q0 12.900 1.100 11.900 L6.330 7.280 A9.650 9.650 0 1 0 -6.330 7.280 Z" fill="#3c2f1a" fill-opacity=".2" transform="translate(0 .8) scale(1.030)"/><path d="M-6.330 7.280 L-1.100 11.900 Q0 12.900 1.100 11.900 L6.330 7.280 A9.650 9.650 0 1 0 -6.330 7.280 Z" fill="#fff"/><circle r="8.2" fill="#f5803a"/><g transform="scale(1.080)"><path d="M-2.900 -4.200v2.600a1.300 1.300 0 0 0 2.600 0v-2.600M-1.600 -4.200v8.400M2.300 4.200v-8.400c-1.300.5-1.900 1.900-1.900 3.400 0 1 .6 1.700 1.900 1.900" fill="none" stroke="#fff" stroke-width="1.200" stroke-linecap="round" stroke-linejoin="round"/></g></g><text x="191.7" y="246" font-size="10.5" fill="#3d85e8" textLength="118.5" lengthAdjust="spacingAndGlyphs" stroke="#fff" stroke-width="2" stroke-opacity=".85" paint-order="stroke" stroke-linejoin="round">Decathlon Novi Beograd</text><g transform="translate(325.9 240.2)"><path d="M-6.330 7.280 L-1.100 11.900 Q0 12.900 1.100 11.900 L6.330 7.280 A9.650 9.650 0 1 0 -6.330 7.280 Z" fill="#3c2f1a" fill-opacity=".2" transform="translate(0 .8) scale(1.030)"/><path d="M-6.330 7.280 L-1.100 11.900 Q0 12.900 1.100 11.900 L6.330 7.280 A9.650 9.650 0 1 0 -6.330 7.280 Z" fill="#fff"/><circle r="8.2" fill="#2b9af3"/><g transform="scale(1.080)"><path d="M-1.900 -4.400h3.800l2.100 7.600h-8z" fill="#fff"/><ellipse cx="0" cy="-2.300" rx="1" ry=".75" fill="#2b9af3"/><path d="M-1.800 0a1.800 1.500 0 0 0 3.600 0" fill="none" stroke="#2b9af3" stroke-opacity=".55" stroke-width=".9"/></g></g><text x="150.4" y="274" font-size="10.5" fill="#3d85e8" textLength="60" lengthAdjust="spacingAndGlyphs" stroke="#fff" stroke-width="2" stroke-opacity=".85" paint-order="stroke" stroke-linejoin="round">Immocentar</text><g transform="translate(225.6 269.2)"><path d="M-6.330 7.280 L-1.100 11.900 Q0 12.900 1.100 11.900 L6.330 7.280 A9.650 9.650 0 1 0 -6.330 7.280 Z" fill="#3c2f1a" fill-opacity=".2" transform="translate(0 .8) scale(1.030)"/><path d="M-6.330 7.280 L-1.100 11.900 Q0 12.900 1.100 11.900 L6.330 7.280 A9.650 9.650 0 1 0 -6.330 7.280 Z" fill="#fff"/><circle r="8.2" fill="#2b9af3"/><g transform="scale(1.080)"><path d="M-1.900 -4.400h3.800l2.100 7.600h-8z" fill="#fff"/><ellipse cx="0" cy="-2.300" rx="1" ry=".75" fill="#2b9af3"/><path d="M-1.800 0a1.800 1.500 0 0 0 3.600 0" fill="none" stroke="#2b9af3" stroke-opacity=".55" stroke-width=".9"/></g></g><text x="18.8" y="328" font-size="10.5" fill="#3d85e8" textLength="16.2" lengthAdjust="spacingAndGlyphs" stroke="#fff" stroke-width="2" stroke-opacity=".85" paint-order="stroke" stroke-linejoin="round">Lidl</text><g transform="translate(50.6 322.3)"><path d="M-6.330 7.280 L-1.100 11.900 Q0 12.900 1.100 11.900 L6.330 7.280 A9.650 9.650 0 1 0 -6.330 7.280 Z" fill="#3c2f1a" fill-opacity=".2" transform="translate(0 .8) scale(1.030)"/><path d="M-6.330 7.280 L-1.100 11.900 Q0 12.900 1.100 11.900 L6.330 7.280 A9.650 9.650 0 1 0 -6.330 7.280 Z" fill="#fff"/><circle r="8.2" fill="#2b9af3"/><g transform="scale(1.080)"><path d="M-4.600 -3.600h1.500l.5 1.300h6.800l-1.200 3.700h-5l-.3 1h5.800v1h-6.900l.8-2.400-1.500-3.700h-.5z" fill="#fff"/><circle cx="-1.900" cy="4.300" r=".9" fill="#fff"/><circle cx="2.400" cy="4.300" r=".9" fill="#fff"/></g></g><text x="89.7" y="346.5" font-size="10.5" fill="#3d85e8" textLength="127.3" lengthAdjust="spacingAndGlyphs" stroke="#fff" stroke-width="2" stroke-opacity=".85" paint-order="stroke" stroke-linejoin="round">Shopping center Piramida</text><g transform="translate(231.6 349)"><path d="M-6.330 7.280 L-1.100 11.900 Q0 12.900 1.100 11.900 L6.330 7.280 A9.650 9.650 0 1 0 -6.330 7.280 Z" fill="#3c2f1a" fill-opacity=".2" transform="translate(0 .8) scale(1.030)"/><path d="M-6.330 7.280 L-1.100 11.900 Q0 12.900 1.100 11.900 L6.330 7.280 A9.650 9.650 0 1 0 -6.330 7.280 Z" fill="#fff"/><circle r="8.2" fill="#2b9af3"/><g transform="scale(1.080)"><path d="M-1.900 -4.400h3.800l2.100 7.600h-8z" fill="#fff"/><ellipse cx="0" cy="-2.300" rx="1" ry=".75" fill="#2b9af3"/><path d="M-1.800 0a1.800 1.500 0 0 0 3.600 0" fill="none" stroke="#2b9af3" stroke-opacity=".55" stroke-width=".9"/></g></g><text x="338.4" y="204" font-size="10.5" fill="#5d7c8d" textLength="102.3" lengthAdjust="spacingAndGlyphs" stroke="#fff" stroke-width="2" stroke-opacity=".85" paint-order="stroke" stroke-linejoin="round">Airport City Belgrade</text><text x="338.4" y="215.7" font-size="8.3" fill="#5d7c8d" textLength="78.8" lengthAdjust="spacingAndGlyphs" stroke="#fff" stroke-width="2" stroke-opacity=".85" paint-order="stroke" stroke-linejoin="round">Airport City Beograd</text><text x="338.4" y="226" font-size="8.3" fill="#5d7c8d" textLength="57.1" lengthAdjust="spacingAndGlyphs" stroke="#fff" stroke-width="2" stroke-opacity=".85" paint-order="stroke" stroke-linejoin="round">- Novi Beograd</text><g transform="translate(323.7 209.2)"><path d="M-6.330 7.280 L-1.100 11.900 Q0 12.900 1.100 11.900 L6.330 7.280 A9.650 9.650 0 1 0 -6.330 7.280 Z" fill="#3c2f1a" fill-opacity=".2" transform="translate(0 .8) scale(1.030)"/><path d="M-6.330 7.280 L-1.100 11.900 Q0 12.900 1.100 11.900 L6.330 7.280 A9.650 9.650 0 1 0 -6.330 7.280 Z" fill="#fff"/><circle r="8.2" fill="#78909c"/><g transform="scale(1.080)"><circle r="3.200" fill="#fff"/></g></g><text x="298.5" y="304.3" font-size="10.5" fill="#3d85e8" textLength="91.3" lengthAdjust="spacingAndGlyphs" stroke="#fff" stroke-width="2" stroke-opacity=".85" paint-order="stroke" stroke-linejoin="round">Delta City Beograd</text><g transform="translate(404.5 298.6)"><path d="M-6.330 7.280 L-1.100 11.900 Q0 12.900 1.100 11.900 L6.330 7.280 A9.650 9.650 0 1 0 -6.330 7.280 Z" fill="#3c2f1a" fill-opacity=".2" transform="translate(0 .8) scale(1.030)"/><path d="M-6.330 7.280 L-1.100 11.900 Q0 12.900 1.100 11.900 L6.330 7.280 A9.650 9.650 0 1 0 -6.330 7.280 Z" fill="#fff"/><circle r="8.2" fill="#2b9af3"/><g transform="scale(1.080)"><path d="M-1.900 -4.400h3.800l2.100 7.600h-8z" fill="#fff"/><ellipse cx="0" cy="-2.300" rx="1" ry=".75" fill="#2b9af3"/><path d="M-1.800 0a1.800 1.500 0 0 0 3.600 0" fill="none" stroke="#2b9af3" stroke-opacity=".55" stroke-width=".9"/></g></g><text x="460.8" y="188.5" font-size="10.5" fill="#2f9467" textLength="75.8" lengthAdjust="spacingAndGlyphs" stroke="#fff" stroke-width="2" stroke-opacity=".85" paint-order="stroke" stroke-linejoin="round">Belgrade Arena</text><text x="460.8" y="199" font-size="8.3" fill="#2f9467" textLength="75.2" lengthAdjust="spacingAndGlyphs" stroke="#fff" stroke-width="2" stroke-opacity=".85" paint-order="stroke" stroke-linejoin="round">Београдска Арена</text><g transform="translate(550.4 188.5)"><path d="M-6.330 7.280 L-1.100 11.900 Q0 12.900 1.100 11.900 L6.330 7.280 A9.650 9.650 0 1 0 -6.330 7.280 Z" fill="#3c2f1a" fill-opacity=".2" transform="translate(0 .8) scale(1.030)"/><path d="M-6.330 7.280 L-1.100 11.900 Q0 12.900 1.100 11.900 L6.330 7.280 A9.650 9.650 0 1 0 -6.330 7.280 Z" fill="#fff"/><circle r="8.2" fill="#1aa260"/><g transform="scale(1.080)"><circle r="2.900" fill="#fff"/></g></g><text x="546" y="75" font-size="10.5" fill="#2f9467" textLength="60" lengthAdjust="spacingAndGlyphs" stroke="#fff" stroke-width="2" stroke-opacity=".85" paint-order="stroke" stroke-linejoin="round">Block 13 Park</text><text x="547" y="86.5" font-size="8.3" fill="#2f9467" textLength="49" lengthAdjust="spacingAndGlyphs" stroke="#fff" stroke-width="2" stroke-opacity=".85" paint-order="stroke" stroke-linejoin="round">Park Blok 13</text><text x="648.3" y="113.4" font-size="10.5" fill="#a558e8" textLength="87.3" lengthAdjust="spacingAndGlyphs" stroke="#fff" stroke-width="2" stroke-opacity=".85" paint-order="stroke" stroke-linejoin="round">Muzej Savremene</text><text x="735.6" y="126.4" font-size="10.5" fill="#a558e8" text-anchor="end" textLength="51" lengthAdjust="spacingAndGlyphs" stroke="#fff" stroke-width="2" stroke-opacity=".85" paint-order="stroke" stroke-linejoin="round">Umetnosti</text><g transform="translate(750.3 115)"><path d="M-6.330 7.280 L-1.100 11.900 Q0 12.900 1.100 11.900 L6.330 7.280 A9.650 9.650 0 1 0 -6.330 7.280 Z" fill="#3c2f1a" fill-opacity=".2" transform="translate(0 .8) scale(1.030)"/><path d="M-6.330 7.280 L-1.100 11.900 Q0 12.900 1.100 11.900 L6.330 7.280 A9.650 9.650 0 1 0 -6.330 7.280 Z" fill="#fff"/><circle r="8.2" fill="#b367f5"/><g transform="scale(1.080)"><path d="M-4.300 -1.300 0 -4.200l4.300 2.900v.9h-8.600zM-3.500 .2h1.500v3h-1.500zM-.75 .2h1.500v3h-1.500zM2 .2h1.500v3h-1.500zM-4.300 3.600h8.600v1h-8.600z" fill="#fff"/></g></g><text x="733" y="59.5" font-size="10.5" fill="#a558e8" textLength="73.5" lengthAdjust="spacingAndGlyphs" stroke="#fff" stroke-width="2" stroke-opacity=".85" paint-order="stroke" stroke-linejoin="round">Barokna kapija</text><g transform="translate(822 54)"><path d="M-6.330 7.280 L-1.100 11.900 Q0 12.900 1.100 11.900 L6.330 7.280 A9.650 9.650 0 1 0 -6.330 7.280 Z" fill="#3c2f1a" fill-opacity=".2" transform="translate(0 .8) scale(1.030)"/><path d="M-6.330 7.280 L-1.100 11.900 Q0 12.900 1.100 11.900 L6.330 7.280 A9.650 9.650 0 1 0 -6.330 7.280 Z" fill="#fff"/><circle r="8.2" fill="#b367f5"/><g transform="scale(1.080)"><path d="M-4.300 -2.200h2l.8-1.300h3l.8 1.300h2v6h-8.600z" fill="#fff"/><circle cx="0" cy=".9" r="1.700" fill="#b367f5"/></g></g><text x="828" y="90.5" font-size="10.5" fill="#2f9467" text-anchor="middle" textLength="62" lengthAdjust="spacingAndGlyphs" stroke="#fff" stroke-width="2" stroke-opacity=".85" paint-order="stroke" stroke-linejoin="round">Kalemegdan</text><text x="828" y="101" font-size="8.3" fill="#2f9467" text-anchor="middle" textLength="50" lengthAdjust="spacingAndGlyphs" stroke="#fff" stroke-width="2" stroke-opacity=".85" paint-order="stroke" stroke-linejoin="round">Калемегдан</text><text x="895.4" y="116.6" font-size="10.5" fill="#a558e8" textLength="88.9" lengthAdjust="spacingAndGlyphs" stroke="#fff" stroke-width="2" stroke-opacity=".85" paint-order="stroke" stroke-linejoin="round">Etnografski muzej</text><g transform="translate(880.4 112.5)"><path d="M-6.330 7.280 L-1.100 11.900 Q0 12.900 1.100 11.900 L6.330 7.280 A9.650 9.650 0 1 0 -6.330 7.280 Z" fill="#3c2f1a" fill-opacity=".2" transform="translate(0 .8) scale(1.030)"/><path d="M-6.330 7.280 L-1.100 11.900 Q0 12.900 1.100 11.900 L6.330 7.280 A9.650 9.650 0 1 0 -6.330 7.280 Z" fill="#fff"/><circle r="8.2" fill="#b367f5"/><g transform="scale(1.080)"><path d="M-4.300 -1.300 0 -4.200l4.300 2.900v.9h-8.600zM-3.500 .2h1.500v3h-1.500zM-.75 .2h1.500v3h-1.500zM2 .2h1.500v3h-1.500zM-4.300 3.600h8.600v1h-8.600z" fill="#fff"/></g></g><text x="901.6" y="157.4" font-size="10.5" fill="#a558e8" text-anchor="end" textLength="80" lengthAdjust="spacingAndGlyphs" stroke="#fff" stroke-width="2" stroke-opacity=".85" paint-order="stroke" stroke-linejoin="round">Republic Square</text><text x="901.6" y="168.8" font-size="8.3" fill="#a558e8" text-anchor="end" textLength="58" lengthAdjust="spacingAndGlyphs" stroke="#fff" stroke-width="2" stroke-opacity=".85" paint-order="stroke" stroke-linejoin="round">Трг републике</text><g transform="translate(916.3 158)"><path d="M-6.330 7.280 L-1.100 11.900 Q0 12.900 1.100 11.900 L6.330 7.280 A9.650 9.650 0 1 0 -6.330 7.280 Z" fill="#3c2f1a" fill-opacity=".2" transform="translate(0 .8) scale(1.030)"/><path d="M-6.330 7.280 L-1.100 11.900 Q0 12.900 1.100 11.900 L6.330 7.280 A9.650 9.650 0 1 0 -6.330 7.280 Z" fill="#fff"/><circle r="8.2" fill="#b367f5"/><g transform="scale(1.080)"><path d="M-2.900 -4.300h1.300v1.200h1v-1.200h1.200v1.200h1v-1.200h1.300v3h-1l.5 3.600h1.100v1.700h-7v-1.700h1.100l.5-3.600h-1z" fill="#fff"/></g></g><text x="717.6" y="181.2" font-size="10.5" fill="#5d7c8d" textLength="67.7" lengthAdjust="spacingAndGlyphs" stroke="#fff" stroke-width="2" stroke-opacity=".85" paint-order="stroke" stroke-linejoin="round">Brankov Most</text><g transform="translate(800.8 178)"><path d="M-6.330 7.280 L-1.100 11.900 Q0 12.900 1.100 11.900 L6.330 7.280 A9.650 9.650 0 1 0 -6.330 7.280 Z" fill="#3c2f1a" fill-opacity=".2" transform="translate(0 .8) scale(1.030)"/><path d="M-6.330 7.280 L-1.100 11.900 Q0 12.900 1.100 11.900 L6.330 7.280 A9.650 9.650 0 1 0 -6.330 7.280 Z" fill="#fff"/><circle r="8.2" fill="#78909c"/><g transform="scale(1.080)"><path d="M-4.300 -.6h8.600v1.300h-8.600zM-3.300 -3.600h1.200v7h-1.200zM2.100 -3.600h1.200v7h-1.200zM-.6 -1.800h1.200v4h-1.200z" fill="#fff"/></g></g><text x="568.9" y="257" font-size="10.5" fill="#a558e8" textLength="59.1" lengthAdjust="spacingAndGlyphs" stroke="#fff" stroke-width="2" stroke-opacity=".85" paint-order="stroke" stroke-linejoin="round">Sava Centar</text><text x="752" y="278.2" font-size="10.5" fill="#2f9467" text-anchor="middle" textLength="22" lengthAdjust="spacingAndGlyphs" stroke="#fff" stroke-width="2" stroke-opacity=".85" paint-order="stroke" stroke-linejoin="round">Park</text><text x="752" y="292" font-size="10.5" fill="#2f9467" text-anchor="middle" textLength="48" lengthAdjust="spacingAndGlyphs" stroke="#fff" stroke-width="2" stroke-opacity=".85" paint-order="stroke" stroke-linejoin="round">Republike</text><text x="752" y="305" font-size="10.5" fill="#2f9467" text-anchor="middle" textLength="34" lengthAdjust="spacingAndGlyphs" stroke="#fff" stroke-width="2" stroke-opacity=".85" paint-order="stroke" stroke-linejoin="round">Srpske</text><text x="690.7" y="340.2" font-size="10.5" fill="#3d85e8" textLength="80.8" lengthAdjust="spacingAndGlyphs" stroke="#fff" stroke-width="2" stroke-opacity=".85" paint-order="stroke" stroke-linejoin="round">Galerija Beograd</text><g transform="translate(786.2 334.5)"><path d="M-6.330 7.280 L-1.100 11.900 Q0 12.900 1.100 11.900 L6.330 7.280 A9.650 9.650 0 1 0 -6.330 7.280 Z" fill="#3c2f1a" fill-opacity=".2" transform="translate(0 .8) scale(1.030)"/><path d="M-6.330 7.280 L-1.100 11.900 Q0 12.900 1.100 11.900 L6.330 7.280 A9.650 9.650 0 1 0 -6.330 7.280 Z" fill="#fff"/><circle r="8.2" fill="#2b9af3"/><g transform="scale(1.080)"><path d="M-1.900 -4.400h3.800l2.100 7.600h-8z" fill="#fff"/><ellipse cx="0" cy="-2.300" rx="1" ry=".75" fill="#2b9af3"/><path d="M-1.800 0a1.800 1.500 0 0 0 3.600 0" fill="none" stroke="#2b9af3" stroke-opacity=".55" stroke-width=".9"/></g></g><text x="979.4" y="3.3" font-size="10.5" fill="#1e9e6a" textLength="26" lengthAdjust="spacingAndGlyphs" stroke="#fff" stroke-width="2" stroke-opacity=".85" paint-order="stroke" stroke-linejoin="round">Silosi</text><g transform="translate(1020 -1.5)"><path d="M-6.330 7.280 L-1.100 11.900 Q0 12.900 1.100 11.900 L6.330 7.280 A9.650 9.650 0 1 0 -6.330 7.280 Z" fill="#3c2f1a" fill-opacity=".2" transform="translate(0 .8) scale(1.030)"/><path d="M-6.330 7.280 L-1.100 11.900 Q0 12.900 1.100 11.900 L6.330 7.280 A9.650 9.650 0 1 0 -6.330 7.280 Z" fill="#fff"/><circle r="8.2" fill="#1aa260"/><g transform="scale(1.080)"><circle r="2.900" fill="#fff"/></g></g><g transform="translate(1074 72.6)"><path d="M-6.330 7.280 L-1.100 11.900 Q0 12.900 1.100 11.900 L6.330 7.280 A9.650 9.650 0 1 0 -6.330 7.280 Z" fill="#3c2f1a" fill-opacity=".2" transform="translate(0 .8) scale(1.030)"/><path d="M-6.330 7.280 L-1.100 11.900 Q0 12.900 1.100 11.900 L6.330 7.280 A9.650 9.650 0 1 0 -6.330 7.280 Z" fill="#fff"/><circle r="8.2" fill="#78909c"/><g transform="scale(1.080)"><circle r="3.200" fill="#fff"/></g></g><text x="1088.7" y="76.7" font-size="10.5" fill="#5d7c8d" stroke="#fff" stroke-width="2" stroke-opacity=".85" paint-order="stroke" stroke-linejoin="round">P</text><g transform="translate(995.4 233)"><path d="M-6.330 7.280 L-1.100 11.900 Q0 12.900 1.100 11.900 L6.330 7.280 A9.650 9.650 0 1 0 -6.330 7.280 Z" fill="#3c2f1a" fill-opacity=".2" transform="translate(0 .8) scale(1.030)"/><path d="M-6.330 7.280 L-1.100 11.900 Q0 12.900 1.100 11.900 L6.330 7.280 A9.650 9.650 0 1 0 -6.330 7.280 Z" fill="#fff"/><circle r="8.2" fill="#78909c"/><g transform="scale(1.080)"><path d="M-.8 -4.600h1.600v2.400h2.200v1.600h-2.200v5h-1.600v-5h-2.200v-1.600h2.200z" fill="#fff"/></g></g><text x="1010.9" y="238.2" font-size="10.5" fill="#5d7c8d" textLength="112" lengthAdjust="spacingAndGlyphs" stroke="#fff" stroke-width="2" stroke-opacity=".85" paint-order="stroke" stroke-linejoin="round">Црква Светог Марка</text><text x="952.5" y="286.4" font-size="10.5" fill="#ef3fae" textLength="75" lengthAdjust="spacingAndGlyphs" stroke="#fff" stroke-width="2" stroke-opacity=".85" paint-order="stroke" stroke-linejoin="round">Metropol Palas</text><g transform="translate(1042.2 280.7)"><path d="M-6.330 7.280 L-1.100 11.900 Q0 12.900 1.100 11.900 L6.330 7.280 A9.650 9.650 0 1 0 -6.330 7.280 Z" fill="#3c2f1a" fill-opacity=".2" transform="translate(0 .8) scale(1.030)"/><path d="M-6.330 7.280 L-1.100 11.900 Q0 12.900 1.100 11.900 L6.330 7.280 A9.650 9.650 0 1 0 -6.330 7.280 Z" fill="#fff"/><circle r="8.2" fill="#f545b6"/><g transform="scale(1.080)"><path d="M-4.400 -3.200h1.300v3.400h7.500v3.400h-1.300v-1.200h-6.200v1.200h-1.300zM-2.400 -2.400a1.200 1.200 0 1 0 .01 0zM-.2 -2.200h3.200a1.400 1.400 0 0 1 1.400 1.400v.4h-4.600z" fill="#fff"/></g></g><text x="891.3" y="304.3" font-size="10.5" fill="#a558e8" textLength="106.9" lengthAdjust="spacingAndGlyphs" stroke="#fff" stroke-width="2" stroke-opacity=".85" paint-order="stroke" stroke-linejoin="round">Nikola Tesla Museum</text><text x="915.8" y="315.2" font-size="8.3" fill="#a558e8" textLength="82.4" lengthAdjust="spacingAndGlyphs" stroke="#fff" stroke-width="2" stroke-opacity=".85" paint-order="stroke" stroke-linejoin="round">Музеј Николе Тесле</text><g transform="translate(1012.4 303.5)"><path d="M-6.330 7.280 L-1.100 11.900 Q0 12.900 1.100 11.900 L6.330 7.280 A9.650 9.650 0 1 0 -6.330 7.280 Z" fill="#3c2f1a" fill-opacity=".2" transform="translate(0 .8) scale(1.030)"/><path d="M-6.330 7.280 L-1.100 11.900 Q0 12.900 1.100 11.900 L6.330 7.280 A9.650 9.650 0 1 0 -6.330 7.280 Z" fill="#fff"/><circle r="8.2" fill="#b367f5"/><g transform="scale(1.080)"><path d="M-4.300 -1.300 0 -4.200l4.300 2.900v.9h-8.600zM-3.500 .2h1.500v3h-1.500zM-.75 .2h1.500v3h-1.500zM2 .2h1.500v3h-1.500zM-4.300 3.600h8.600v1h-8.600z" fill="#fff"/></g></g><g transform="translate(519.5 292)"><circle r="5.200" fill="#fff" fill-opacity=".9"/><rect x="-3.600" y="-3.800" width="7.200" height="7.600" rx="1.600" fill="#3d5568"/><rect x="-2.300" y="-2.400" width="4.600" height="2.600" rx=".5" fill="#fff"/><circle cx="-1.500" cy="2" r=".7" fill="#fff"/><circle cx="1.500" cy="2" r=".7" fill="#fff"/></g><g transform="translate(872.9 271)"><circle r="5.200" fill="#fff" fill-opacity=".9"/><rect x="-3.600" y="-3.800" width="7.200" height="7.600" rx="1.600" fill="#3d5568"/><rect x="-2.300" y="-2.400" width="4.600" height="2.600" rx=".5" fill="#fff"/><circle cx="-1.500" cy="2" r=".7" fill="#fff"/><circle cx="1.500" cy="2" r=".7" fill="#fff"/></g><g transform="translate(451 84)"><path d="M-11.100 8.300 L0 19.400 L11.100 8.300 A13.900 13.900 0 1 0 -11.100 8.300z" fill="#b02a37"/><g transform="translate(0 1.600)"><path d="M-5.700 -7.500v13" stroke="#fff" stroke-width="1.300" fill="none" stroke-linecap="round"/><path d="M-5 -7c2.500-1.300 4.500-.3 6 .2s3.500 1 5.600-.2v7.600c-2.100 1.200-4.100.7-5.600.2s-3.500-1.500-6-.2z" fill="none" stroke="#fff" stroke-width="1.100"/><path d="M-1.300 -7.300v8M2.600 -6.200v7.800M-5 -4.600c2.500-1.300 4.500-.3 6 .2s3.500 1 5.600-.2M-5 -2c2.500-1.300 4.500-.3 6 .2s3.500 1 5.600-.2" fill="none" stroke="#fff" stroke-width=".9"/></g></g><g transform="translate(643 244.8)"><path d="M-11.100 8.300 L0 19.400 L11.100 8.300 A13.900 13.900 0 1 0 -11.100 8.300z" fill="#2156c8"/><path d="M-7.600 .5 0 -6.700l7.600 7.200M-5.400 -1v8.700h10.800v-8.700M-1.900 7.500v-4.300h3.800v4.300" fill="none" stroke="#fff" stroke-width="1.500" stroke-linejoin="round" stroke-linecap="round"/></g><rect x="1054" y="8.100" width="32" height="32" rx="2" fill="#fff" stroke="#000" stroke-opacity=".08" stroke-width=".8"/><path d="M1064 22.600v-4.600h4.600M1072.200 18h4.600v4.600M1076.800 26.200v4.600h-4.600M1068.600 30.800h-4.600v-4.600" fill="none" stroke="#666" stroke-width="2"/><rect x="1054" y="260.300" width="32" height="64.500" rx="2" fill="#fff" stroke="#000" stroke-opacity=".08" stroke-width=".8"/><path d="M1058.300 292.500h23.400" stroke="#e6e6e6" stroke-width="1"/><path d="M1063.700 276h12.600M1070 269.700v12.600M1063.700 309h12.600" stroke="#606060" stroke-width="1.600" fill="none"/><rect x="908" y="334" width="187" height="11" fill="#f5f5f5" fill-opacity=".75"/><text x="917.4" y="341.3" font-size="7.6" fill="#1f1f1f" textLength="68.6" lengthAdjust="spacingAndGlyphs">Keyboard shortcuts</text><text x="996.2" y="341.3" font-size="7.6" fill="#1f1f1f" textLength="60.7" lengthAdjust="spacingAndGlyphs">Map Data ©2025</text><text x="1066.7" y="341.3" font-size="7.6" fill="#1f1f1f" textLength="22.8" lengthAdjust="spacingAndGlyphs">Terms</text><text x="8.600" y="337.600" font-size="14.400" textLength="43" lengthAdjust="spacingAndGlyphs" fill="#fff" stroke="#fff" stroke-width="1.800" stroke-opacity=".9" stroke-linejoin="round">Google</text><text x="8.600" y="337.600" font-size="14.400" textLength="43" lengthAdjust="spacingAndGlyphs" stroke-width=".12"><tspan fill="#4285f4" stroke="#4285f4">G</tspan><tspan fill="#ea4335" stroke="#ea4335">o</tspan><tspan fill="#fbbc05" stroke="#fbbc05">o</tspan><tspan fill="#4285f4" stroke="#4285f4">g</tspan><tspan fill="#34a853" stroke="#34a853">l</tspan><tspan fill="#ea4335" stroke="#ea4335">e</tspan></text><defs><clipPath id="cd"><polygon points="846,8 1000,30 1050,70 1040,150 990,172 905,136 874,104 874,46"/></clipPath><clipPath id="ce"><polygon points="836,186 900,200 990,180 1060,165 1095,168 1095,345 880,345 850,300 884,271"/></clipPath><clipPath id="cg"><polygon points="0,250 38,222 62,198 72,178 82,176 114,190 163,210 186,230 190,246 134,278 60,320 18,344 0,344"/></clipPath><clipPath id="ch"><polygon points="196,20 262,40 240,92 216,136 160,112 166,74 172,40"/></clipPath><clipPath id="cf"><polygon points="1010,58 1095,74 1095,160 1070,156 1040,150 1050,72"/></clipPath></defs><defs><path id="bj" d="M787 50 Q795 30 824 23 Q850 20 872 48"/></defs></svg>
<div class="ib" style="left:462px;top:97px;width:24px;height:23px;background:#ff5757"></div>
<svg class="i" style="left:462px;top:96.5px;width:24px;height:24px;" viewBox="0 0 24 24"><g fill="none" stroke="#fff" stroke-width="1.500" stroke-linejoin="round"><path d="M12.200 18.200c3.200-3.600 5-5.900 5-8.600a5 5 0 0 0-10 0c0 2.700 1.800 5 5 8.600z"/><circle cx="12.200" cy="9.400" r="1.700" fill="#ffb0b0"/></g></svg>
<span class="t" id="t39" style="top:101.01px;font-size:14px;left:492.30px;font-weight:700;color:#1f2126;transform:scaleX(0.8640);transform-origin:0 0;">Route Details</span>
<span class="t" id="t40" style="top:101.02px;font-size:13.5px;left:572.30px;font-weight:700;color:#e5484d;transform:scaleX(0.9875);transform-origin:0 0;">*</span>
<span class="t" id="t41" style="top:102.00px;font-size:13px;left:682.40px;color:#3d7df5;transform:scaleX(0.9705);transform-origin:0 0;">Hide Map</span>
<svg class="i" style="left:745.4px;top:101.6px;width:12.8px;height:12.6px;color:#3d7df5;" viewBox="0 0 14 13"><path fill="none" stroke="currentColor" stroke-linecap="round" stroke-linejoin="round" stroke-width="1.900" d="M6.400 1.200 1.400 6.500l5 5.300M12.400 1.200 7.400 6.500l5 5.300"/></svg>
<svg class="i" style="left:468.1px;top:138.9px;width:14px;height:14px;" viewBox="0 0 14 14"><circle cx="7" cy="7" r="4.450" fill="#fff" stroke="#8eaefa" stroke-width="3.900"/></svg>
<span class="t" id="t42" style="top:139.00px;font-size:13px;left:488.40px;transform:scaleX(0.9599);transform-origin:0 0;">Transfer</span>
<svg class="i" style="left:550.8px;top:138.9px;width:14px;height:14px;" viewBox="0 0 14 14"><circle cx="7" cy="7" r="5.800" fill="#fff" stroke="#dde1e7" stroke-width="1"/></svg>
<span class="t" id="t43" style="top:139.00px;font-size:13px;left:570.20px;transform:scaleX(1.0325);transform-origin:0 0;">Hourly</span>
<svg class="i" style="left:483.8px;top:177px;width:17px;height:17px;color:#1f2126;" viewBox="0 0 17 17"><path fill="none" stroke="currentColor" stroke-width="1.750" stroke-linecap="round" stroke-linejoin="round" d="M1 8.600 8.600 1.300l7.600 7.300M3.100 7v9h11.100V7M6.900 15.900v-4.400a1.700 1.700 0 0 1 3.400 0v4.400"/></svg>
<span class="t" id="t44" style="top:176.00px;font-size:13px;left:509.30px;font-weight:700;color:#22252a;transform:scaleX(0.9187);transform-origin:0 0;">Sava Center, Milentija Popovića 9,</span>
<span class="t" id="t45" style="top:191.00px;font-size:13px;left:509.30px;font-weight:700;color:#22252a;transform:scaleX(0.9290);transform-origin:0 0;">Beograd 11000, Serbia</span>
<div class="badge" style="left:735.2px;top:175.2px;width:46.7px;height:18.6px;"></div>
<span class="t" id="t46" style="top:180.00px;font-size:11px;left:742.00px;font-weight:700;color:#fff;transform:scaleX(0.9424);transform-origin:0 0;">Pickup</span>
<svg class="i" style="left:484px;top:226.9px;width:17px;height:17px;color:#1f2126;" viewBox="0 0 17 17"><path fill="none" stroke="currentColor" stroke-width="1.700" stroke-linecap="round" d="M1.700 .9v15.600"/><path fill="none" stroke="currentColor" stroke-width="1.300" stroke-linejoin="round" d="M2.300 1.900c2.200-1.300 4.400-.600 6.700.300s4.600 1.200 6.800 0v10.600c-2.200 1.200-4.500.900-6.800 0s-4.500-1.600-6.700-.300zM2.300 5.400c2.200-1.300 4.400-.600 6.700.300s4.600 1.200 6.800 0M2.300 8.900c2.200-1.300 4.400-.600 6.700.300s4.600 1.200 6.800 0M6.800 1.500v10.600M11.300 2.800v10.600"/><path fill="currentColor" fill-opacity=".55" d="M2.300 1.900c1.500-.900 3-.900 4.500-.400v3.500c-1.500-.500-3-.500-4.500.400zM6.800 5c1.500.500 3 1.100 4.500 1.300v3.500c-1.500-.200-3-.800-4.500-1.300zM11.300 2.800c1.500.300 3 .100 4.500-.600v3.500c-1.500.700-3 .900-4.500.600zM2.300 8.900c1.500-.900 3-.900 4.500-.400v3.500c-1.500-.500-3-.500-4.500.400zM11.300 9.800c1.500.300 3 .100 4.500-.600v3.300c-1.500.700-3 1-4.500.700z"/></svg>
<span class="t" id="t47" style="top:226.00px;font-size:13px;left:509.30px;font-weight:700;color:#22252a;transform:scaleX(0.9023);transform-origin:0 0;">Fontana, Belgrade, Serbia</span>
<div class="badge" style="left:728.1px;top:225.3px;width:53.8px;height:18.6px;"></div>
<span class="t" id="t48" style="top:230.00px;font-size:11px;left:734.10px;font-weight:700;color:#fff;transform:scaleX(0.9704);transform-origin:0 0;">Drop off</span>
</section>
<section class="g" aria-label="Service Details">
<div class="card" style="left:455.5px;top:445px;width:470.5px;height:276.9px;"></div>
<div class="ib" style="left:462px;top:452px;width:24px;height:23px;background:#ff5757"></div>
<svg class="i" style="left:462px;top:451.5px;width:24px;height:24px;" viewBox="0 0 24 24"><g fill="none" stroke="#fff" stroke-width="2.100" stroke-linecap="round" stroke-linejoin="round"><circle cx="12.100" cy="11.600" r="6.500"/><path d="M12.100 8v3.700l2.500 1.500"/></g></svg>
<span class="t" id="t49" style="top:456.01px;font-size:14px;left:492.30px;font-weight:700;color:#1f2126;transform:scaleX(0.8522);transform-origin:0 0;">Service Details</span>
<span class="t" id="t50" style="top:456.01px;font-size:13.5px;left:580.00px;font-weight:700;color:#e5484d;transform:scaleX(0.9875);transform-origin:0 0;">*</span>
<span class="t" id="t51" style="top:490.01px;font-size:12px;left:468.80px;color:#4b5058;transform:scaleX(0.9926);transform-origin:0 0;">Fleet Type</span>
<span class="t" id="t52" style="top:512.00px;font-size:13px;left:469.30px;color:#24272c;transform:scaleX(0.9555);transform-origin:0 0;">Limo Fleet</span>
<span class="t" id="t53" style="top:543.01px;font-size:12px;left:468.80px;color:#4b5058;transform:scaleX(0.9929);transform-origin:0 0;">Requested Vehicle Type</span>
<span class="t" id="t54" style="top:566.00px;font-size:13px;left:469.10px;color:#24272c;transform:scaleX(0.8964);transform-origin:0 0;">Sedan</span>
<span class="t" id="t55" style="top:597.01px;font-size:12px;left:468.80px;color:#4b5058;transform:scaleX(1.0045);transform-origin:0 0;">Dispatched Vehicle Type</span>
<span class="t" id="t56" style="top:620.00px;font-size:13px;left:469.10px;color:#24272c;transform:scaleX(0.8964);transform-origin:0 0;">Sedan</span>
<span class="t" id="t57" style="top:657.01px;font-size:12px;left:468.80px;color:#4b5058;transform:scaleX(0.9562);transform-origin:0 0;">Passengers</span>
<span class="t" id="t58" style="top:657.01px;font-size:12px;left:549.90px;color:#4b5058;transform:scaleX(0.9430);transform-origin:0 0;">Bags</span>
<span class="t" id="t59" style="top:680.00px;font-size:13px;left:469.80px;color:#24272c;transform:scaleX(0.8294);transform-origin:0 0;">1</span>
<span class="t" id="t60" style="top:680.00px;font-size:13px;left:549.70px;color:#24272c;transform:scaleX(1.0229);transform-origin:0 0;">0</span>
</section>
<section class="g" aria-label="Pickup Time">
<div class="card" style="left:940.5px;top:445px;width:470.4px;height:276.9px;"></div>
<div class="ib" style="left:947px;top:452px;width:24px;height:23px;background:#ff5757"></div>
<svg class="i" style="left:947px;top:451.5px;width:24px;height:24px;" viewBox="0 0 24 24"><g fill="none" stroke="#fff" stroke-width="2.100" stroke-linecap="round" stroke-linejoin="round"><circle cx="12.100" cy="11.600" r="6.500"/><path d="M12.100 8v3.700l2.500 1.500"/></g></svg>
<span class="t" id="t61" style="top:456.01px;font-size:14px;left:977.20px;font-weight:700;color:#1f2126;transform:scaleX(0.8465);transform-origin:0 0;">Pickup Time</span>
<span class="t" id="t62" style="top:456.01px;font-size:13.5px;left:1049.60px;font-weight:700;color:#e5484d;transform:scaleX(0.9875);transform-origin:0 0;">*</span>
<span class="t" id="t63" style="top:491.00px;font-size:13px;left:954.00px;color:#24272c;transform:scaleX(0.9736);transform-origin:0 0;">Europe/Belgrade</span>
<span class="t" id="t64" style="top:523.00px;font-size:13px;left:954.00px;color:#24272c;transform:scaleX(0.9615);transform-origin:0 0;">2nd September 2025 &nbsp;05:00 PM</span>
</section>
<section class="g" aria-label="Additional Services">
<div class="card" style="left:1425.5px;top:445px;width:470.6px;height:276.9px;"></div>
<div class="ib" style="left:1432px;top:452px;width:23px;height:23px;background:#fdbb3a"></div>
<svg class="i" style="left:1431.5px;top:451.5px;width:24px;height:24px;" viewBox="0 0 24 24"><path fill="#fff" fill-opacity=".92" d="M6.200 5.600h11.600l2.300 6.200v6.600h-2.600v-1.600H6.500v1.600H3.900v-6.600zM7.600 7.600l-1.300 3.600h11.400l-1.300-3.600zM5.700 13v2h2.900v-2zM15.400 13v2h2.900v-2z" fill-rule="evenodd"/></svg>
<span class="t" id="t65" style="top:456.01px;font-size:14px;left:1461.60px;font-weight:700;color:#1f2126;transform:scaleX(0.8496);transform-origin:0 0;">Additional Services</span>
<span class="t" id="t66" style="top:491.00px;font-size:13px;left:1439.00px;color:#24272c;transform:scaleX(0.9686);transform-origin:0 0;">No Additional Services</span>
</section>
<section class="g" aria-label="Notes">
<div class="card" style="left:455.5px;top:736px;width:955.4px;height:115.8px;"></div>
<div class="ib" style="left:462px;top:742.4px;width:24px;height:22.4px;background:#fdbb3a"></div>
<svg class="i" style="left:462px;top:741.6px;width:24px;height:24px;" viewBox="0 0 24 24"><g fill="none" stroke="#fff" stroke-width="2" stroke-linecap="round"><circle cx="12" cy="8.600" r="3.200"/><path d="M5.600 19.200c.5-3.600 3-5.400 6.400-5.400s5.900 1.800 6.400 5.400"/></g></svg>
<span class="t" id="t67" style="top:746.01px;font-size:14px;left:492.20px;font-weight:700;color:#1f2126;transform:scaleX(0.8713);transform-origin:0 0;">Notes</span>
<span class="t" id="t68" style="top:780.00px;font-size:11px;left:469.40px;color:#4b5058;transform:scaleX(0.9443);transform-origin:0 0;">Passenger Note</span>
<svg class="i" style="left:482px;top:806.9px;width:10px;height:10px;color:#3d7df5;" viewBox="0 0 12 12"><path fill="none" stroke="currentColor" stroke-width="1.600" stroke-linecap="round" d="M6 .9v10.200M.9 6h10.200"/></svg>
<span class="t" id="t69" style="top:807.00px;font-size:11px;left:499.20px;color:#3d7df5;transform:scaleX(0.9713);transform-origin:0 0;">Add Passenger Note</span>
<span class="t" id="t70" style="top:780.00px;font-size:11px;left:785.20px;color:#4b5058;transform:scaleX(0.9885);transform-origin:0 0;">Dispatch Note</span>
<svg class="i" style="left:797.8px;top:806.9px;width:10px;height:10px;color:#3d7df5;" viewBox="0 0 12 12"><path fill="none" stroke="currentColor" stroke-width="1.600" stroke-linecap="round" d="M6 .9v10.200M.9 6h10.200"/></svg>
<span class="t" id="t71" style="top:807.00px;font-size:11px;left:815.20px;color:#3d7df5;transform:scaleX(1.0063);transform-origin:0 0;">Add Dispatch Note</span>
<span class="t" id="t72" style="top:780.00px;font-size:11px;left:1101.10px;color:#4b5058;transform:scaleX(1.0114);transform-origin:0 0;">Internal Note</span>
<svg class="i" style="left:1114.1px;top:806.9px;width:10px;height:10px;color:#3d7df5;" viewBox="0 0 12 12"><path fill="none" stroke="currentColor" stroke-width="1.600" stroke-linecap="round" d="M6 .9v10.200M.9 6h10.200"/></svg>
<span class="t" id="t73" style="top:807.00px;font-size:11px;left:1131.20px;color:#3d7df5;transform:scaleX(1.0254);transform-origin:0 0;">Add Internal Note</span>
</section>
<section class="g" aria-label="Dispatch">
<div class="card" style="left:455.5px;top:866px;width:955.4px;height:175.8px;"></div>
<div class="ib" style="left:462px;top:872.2px;width:24px;height:22.4px;background:#1e3f8f"></div>
<svg class="i" style="left:462px;top:871.4px;width:24px;height:24px;" viewBox="0 0 24 24"><g fill="none" stroke="#fff" stroke-width="1.500" stroke-linejoin="round"><rect x="4.300" y="8.200" width="15.400" height="10.600" rx="2"/><path d="M9.400 8V6.600a1.300 1.300 0 0 1 1.300-1.300h2.600a1.300 1.300 0 0 1 1.300 1.300V8"/></g><path d="M7.300 8.600h1.900v9.800h-1.900zM14.800 8.600h1.900v9.800h-1.900z" fill="#fff"/></svg>
<span class="t" id="t74" style="top:876.01px;font-size:14px;left:492.50px;color:#1f2126;transform:scaleX(0.9143);transform-origin:0 0;-webkit-text-stroke:.4px #1f2126;">Dispatch</span>
<span class="t" id="t75" style="top:910.02px;font-size:10px;left:471.90px;font-weight:700;color:#24272c;transform:scaleX(0.9587);transform-origin:0 0;">Status</span>
<div class="" style="left:472.2px;top:933.2px;width:88.6px;height:28.5px;background:#d3ecf9;border-radius:3px"></div>
<span class="t" id="t76" style="top:939.01px;font-size:15px;left:483.30px;font-weight:700;color:#22252a;transform:scaleX(1.0272);transform-origin:0 0;">OnScene</span>
<span class="t" id="t77" style="top:910.02px;font-size:10px;left:940.30px;font-weight:700;color:#24272c;transform:scaleX(0.9435);transform-origin:0 0;">Assignment</span>
<span class="t" id="t78" style="top:935.00px;font-size:11.5px;left:940.30px;color:#24272c;transform:scaleX(1.0074);transform-origin:0 0;">Driver</span>
<span class="t" id="t79" style="top:955.02px;font-size:10px;left:940.30px;color:#4b5058;transform:scaleX(1.0264);transform-origin:0 0;">Driver Details</span>
<span class="t" id="t80" style="top:972.02px;font-size:10px;left:940.30px;color:#24272c;transform:scaleX(1.0121);transform-origin:0 0;">Luka Nikic</span>
<span class="t" id="t81" style="top:988.02px;font-size:10px;left:940.20px;color:#24272c;transform:scaleX(1.0833);transform-origin:0 0;">+12023211236</span>
<span class="t" id="t82" style="top:1003.02px;font-size:10px;left:940.30px;color:#24272c;transform:scaleX(1.0454);transform-origin:0 0;">luka.nikic1755693661558@driver.co</span>
</section>
<section class="g" aria-label="Pricing">
<div class="card" style="left:1425.5px;top:736px;width:470.6px;height:305.8px;"></div>
<div class="ib" style="left:1432px;top:742.4px;width:23px;height:22.4px;background:#1e3f8f"></div>
<svg class="i" style="left:1431.5px;top:741.6px;width:24px;height:24px;" viewBox="0 0 24 24"><g fill="none" stroke="#fff" stroke-width="1.700" stroke-linejoin="round"><path d="M5.400 7a1.600 1.600 0 0 1 1.600-1.600h5.200a1.600 1.600 0 0 1 1.100.5l5.800 5.800a1.600 1.600 0 0 1 0 2.300l-5.100 5.100a1.600 1.600 0 0 1-2.300 0l-5.800-5.800a1.600 1.600 0 0 1-.5-1.100z"/></g><circle cx="8.700" cy="8.700" r="1.150" fill="#fff"/></svg>
<span class="t" id="t83" style="top:746.01px;font-size:14px;left:1461.80px;color:#1f2126;transform:scaleX(0.9300);transform-origin:0 0;-webkit-text-stroke:.4px #1f2126;">Pricing</span>
<span class="t" id="t84" style="top:796.00px;font-size:11px;left:1448.10px;font-weight:700;color:#1f2126;transform:scaleX(0.9417);transform-origin:0 0;-webkit-text-stroke:.25px #1f2126;">Essential pricing</span>
<div class="" style="left:1437.9px;top:817px;width:444.8px;height:39.5px;background:#f8f9fa;border-top:1px solid #dfe2e7"></div>
<span class="t" id="t85" style="top:832.01px;font-size:12px;right:345.80px;color:#4b5058;transform:scaleX(0.9684);transform-origin:100% 0;">Base Price</span>
<span class="t" id="t86" style="top:831.00px;font-size:13px;right:36.90px;color:#24272c;transform:scaleX(0.9510);transform-origin:100% 0;">RSD40,000.00</span>
<span class="t" id="t87" style="top:871.01px;font-size:12px;right:345.80px;color:#4b5058;transform:scaleX(1.0142);transform-origin:100% 0;">Base Price Override</span>
<span class="t" id="t88" style="top:870.00px;font-size:13px;right:36.90px;color:#24272c;transform:scaleX(0.9194);transform-origin:100% 0;">RSD0.00</span>
<div class="" style="left:1437.9px;top:908.8px;width:444.8px;height:1px;background:#dfe2e7"></div>
<span class="t" id="t89" style="top:920.01px;font-size:13.5px;right:345.80px;font-weight:700;color:#1f2126;transform:scaleX(0.9344);transform-origin:100% 0;">Total</span>
<span class="t" id="t90" style="top:920.00px;font-size:13px;right:36.90px;font-weight:700;color:#1f2126;transform:scaleX(0.9639);transform-origin:100% 0;">RSD40,000.00</span>
</section>
</body>
</html>
